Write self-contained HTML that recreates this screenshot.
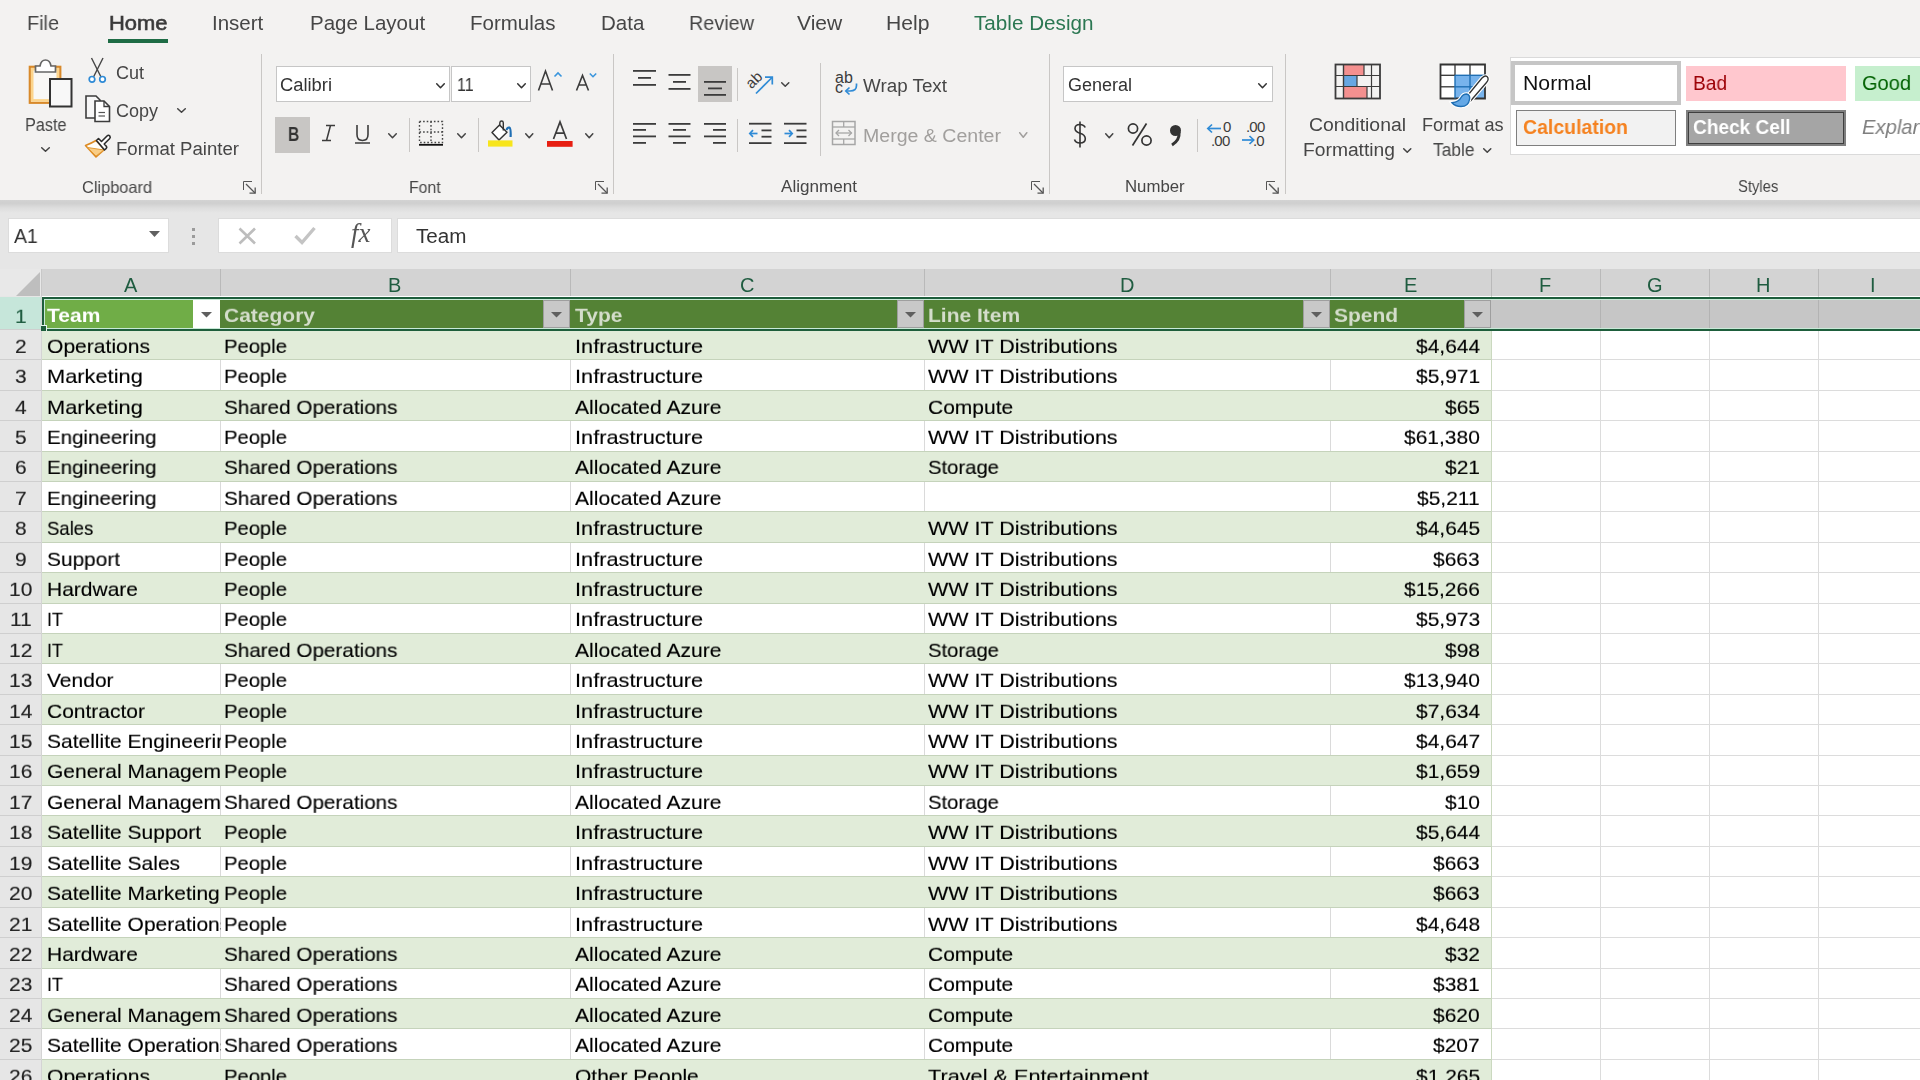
<!DOCTYPE html>
<html><head><meta charset="utf-8"><title>Excel</title><style>
*{margin:0;padding:0;box-sizing:border-box}
html,body{width:1920px;height:1080px;overflow:hidden}
body{position:relative;background:#E6E6E6;font-family:"Liberation Sans",sans-serif;-webkit-font-smoothing:antialiased}
.a{position:absolute}
.t{position:absolute;white-space:pre;will-change:transform}
svg{overflow:visible}
</style></head><body>
<div class="a" style="left:0px;top:0px;width:1920px;height:200px;background:#F3F2F1"></div>
<div class="a" style="left:0px;top:200px;width:1920px;height:13px;background:linear-gradient(#D3D3D3 0%,#CFCFCF 25%,#DDDDDD 60%,#E6E6E6 100%)"></div>
<div class="t" style="left:27.00px;top:13.24px;font-size:20.5px;line-height:20.5px;color:#464646;font-weight:normal;font-style:normal;transform:scale(0.9689,1.0000);transform-origin:0 17.36px;">File</div>
<div class="t" style="left:211.80px;top:13.24px;font-size:20.5px;line-height:20.5px;color:#464646;font-weight:normal;font-style:normal;transform:scale(0.9947,1.0000);transform-origin:0 17.36px;">Insert</div>
<div class="t" style="left:309.70px;top:13.24px;font-size:20.5px;line-height:20.5px;color:#464646;font-weight:normal;font-style:normal;">Page Layout</div>
<div class="t" style="left:470.40px;top:13.24px;font-size:20.5px;line-height:20.5px;color:#464646;font-weight:normal;font-style:normal;transform:scale(0.9948,1.0000);transform-origin:0 17.36px;">Formulas</div>
<div class="t" style="left:600.60px;top:13.24px;font-size:20.5px;line-height:20.5px;color:#464646;font-weight:normal;font-style:normal;transform:scale(0.9927,1.0000);transform-origin:0 17.36px;">Data</div>
<div class="t" style="left:688.60px;top:13.24px;font-size:20.5px;line-height:20.5px;color:#464646;font-weight:normal;font-style:normal;transform:scale(0.9661,1.0000);transform-origin:0 17.36px;">Review</div>
<div class="t" style="left:797.00px;top:13.24px;font-size:20.5px;line-height:20.5px;color:#464646;font-weight:normal;font-style:normal;transform:scale(1.0268,1.0000);transform-origin:0 17.36px;">View</div>
<div class="t" style="left:885.50px;top:13.24px;font-size:20.5px;line-height:20.5px;color:#464646;font-weight:normal;font-style:normal;transform:scale(1.0316,1.0000);transform-origin:0 17.36px;">Help</div>
<div class="t" style="left:108.50px;top:13.24px;font-size:20.5px;line-height:20.5px;color:#3A3A3A;font-weight:normal;font-style:normal;transform:scale(1.0696,1.0000);transform-origin:0 17.36px;-webkit-text-stroke:0.6px #3A3A3A;">Home</div>
<div class="t" style="left:973.60px;top:13.24px;font-size:20.5px;line-height:20.5px;color:#2B7752;font-weight:normal;font-style:normal;transform:scale(1.0083,1.0000);transform-origin:0 17.36px;">Table Design</div>
<div class="a" style="left:108px;top:39px;width:60px;height:4px;background:#1E6C45"></div>
<svg class="a" style="left:28px;top:58px;" width="46" height="50" viewBox="0 0 46 50">
<rect x="1.8" y="8.8" width="30.5" height="36" fill="#F9F8F6" stroke="#D8892A" stroke-width="2.2"/>
<rect x="4.2" y="11.2" width="25.6" height="31.2" fill="none" stroke="#FCD48C" stroke-width="2.6"/>
<path d="M7.5 14 V8 H12 Q13 2 17.5 2 Q22 2 23 8 H27.5 V14 Z" fill="#FFFFFF" stroke="#666" stroke-width="1.7"/>
<rect x="22" y="21" width="21.5" height="27.5" fill="#F8F8F8" stroke="#333" stroke-width="2"/>
</svg>
<div class="t" style="left:25.30px;top:115.76px;font-size:18px;line-height:18px;color:#464646;font-weight:normal;font-style:normal;transform:scale(0.9017,1.0000);transform-origin:0 15.24px;">Paste</div>
<svg class="a" style="left:40.5px;top:147px;" width="9" height="5" viewBox="0 0 9 5"><polyline points="0.7,0.7 4.5,4.3 8.3,0.7" fill="none" stroke="#444" stroke-width="1.5" stroke-linecap="round" stroke-linejoin="round"/></svg>
<svg class="a" style="left:88px;top:57px;" width="19" height="27" viewBox="0 0 19 27">
<line x1="3.5" y1="1" x2="13" y2="20" stroke="#444" stroke-width="1.4"/>
<line x1="15" y1="1" x2="5.5" y2="20" stroke="#444" stroke-width="1.4"/>
<circle cx="4" cy="22.3" r="2.8" fill="#fff" stroke="#2F8BD6" stroke-width="1.7"/>
<circle cx="14.5" cy="22.3" r="2.8" fill="#fff" stroke="#2F8BD6" stroke-width="1.7"/>
</svg>
<div class="t" style="left:116.00px;top:63.56px;font-size:18px;line-height:18px;color:#464646;font-weight:normal;font-style:normal;">Cut</div>
<svg class="a" style="left:84px;top:95px;" width="28" height="28" viewBox="0 0 28 28">
<path d="M2 1 H12 L16 5 V23 H2 Z" fill="#F7F7F7" stroke="#3C3C3C" stroke-width="1.6"/>
<path d="M11 6 H20 L25.5 11.5 V26.5 H11 Z" fill="#FFFFFF" stroke="#3C3C3C" stroke-width="1.6"/>
<path d="M20 6 V11.5 H25.5" fill="none" stroke="#3C3C3C" stroke-width="1.3"/>
<line x1="14.5" y1="17.5" x2="21" y2="17.5" stroke="#555" stroke-width="1.2"/>
<line x1="14.5" y1="21" x2="21" y2="21" stroke="#555" stroke-width="1.2"/>
</svg>
<div class="t" style="left:116.00px;top:101.56px;font-size:18px;line-height:18px;color:#464646;font-weight:normal;font-style:normal;">Copy</div>
<svg class="a" style="left:176.5px;top:107.5px;" width="9" height="5" viewBox="0 0 9 5"><polyline points="0.7,0.7 4.5,4.3 8.3,0.7" fill="none" stroke="#444" stroke-width="1.5" stroke-linecap="round" stroke-linejoin="round"/></svg>
<svg class="a" style="left:80px;top:128px;" width="36" height="36" viewBox="0 0 36 36">
<path d="M5.5 17.5 Q11 15.5 16 12.5 L24.5 21.5 L16 29 Z" fill="#FFFDF8" stroke="#DD8A22" stroke-width="1.6" stroke-linejoin="round"/>
<path d="M7.5 19.5 L24 22 L16 28 Z" fill="#F9CD85" stroke="#E39A35" stroke-width="1"/>
<path d="M16.5 12.5 L18.5 10.5 L21.5 13.5 L27 8 Q28.5 6.5 29.8 8 Q30.8 9.5 29.5 10.8 L24.2 16 L26.5 18.5 Q27.2 19.6 26 20.7 L24.5 22 Z" fill="#FFFFFF" stroke="#2B2B2B" stroke-width="1.6" stroke-linejoin="round"/>
</svg>
<div class="t" style="left:116.00px;top:140.26px;font-size:18px;line-height:18px;color:#464646;font-weight:normal;font-style:normal;transform:scale(1.0333,1.0000);transform-origin:0 15.24px;">Format Painter</div>
<div class="t" style="left:82.00px;top:178.73px;font-size:16.5px;line-height:16.5px;color:#464646;font-weight:normal;font-style:normal;transform:scale(0.9912,1.0000);transform-origin:0 13.97px;">Clipboard</div>
<svg class="a" style="left:243px;top:181px;" width="13" height="13" viewBox="0 0 13 13"><polyline points="0.5,9 0.5,0.5 9,0.5" fill="none" stroke="#555" stroke-width="1"/><line x1="3" y1="3" x2="12" y2="12" stroke="#555" stroke-width="1.3"/><polyline points="6.5,12.2 12.2,12.2 12.2,6.5" fill="none" stroke="#555" stroke-width="1.3"/></svg>
<div class="a" style="left:261px;top:54px;width:1px;height:140px;background:#C9C7C5"></div>
<div class="a" style="left:276px;top:66px;width:174px;height:36px;background:#FFFFFF;border:1px solid #C6C6C6"></div>
<div class="t" style="left:280.00px;top:76.36px;font-size:18px;line-height:18px;color:#333;font-weight:normal;font-style:normal;transform:scale(1.0194,1.0000);transform-origin:0 15.24px;">Calibri</div>
<svg class="a" style="left:435.5px;top:82.5px;" width="9" height="5.5" viewBox="0 0 9 5.5"><polyline points="0.7,0.7 4.5,4.8 8.3,0.7" fill="none" stroke="#333" stroke-width="1.5" stroke-linecap="round" stroke-linejoin="round"/></svg>
<div class="a" style="left:451px;top:66px;width:80px;height:36px;background:#FFFFFF;border:1px solid #C6C6C6"></div>
<div class="t" style="left:456.50px;top:76.36px;font-size:18px;line-height:18px;color:#333;font-weight:normal;font-style:normal;transform:scale(0.8831,1.0000);transform-origin:0 15.24px;">11</div>
<svg class="a" style="left:516.5px;top:82.5px;" width="9" height="5.5" viewBox="0 0 9 5.5"><polyline points="0.7,0.7 4.5,4.8 8.3,0.7" fill="none" stroke="#333" stroke-width="1.5" stroke-linecap="round" stroke-linejoin="round"/></svg>
<svg class="a" style="left:537px;top:70px;" width="27" height="22" viewBox="0 0 27 22">
<path d="M1.5 20.5 L8.5 1 L15.5 20.5 M3.9 14 H13.1" fill="none" stroke="#3C3C3C" stroke-width="1.6"/>
<polyline points="17.5,6.5 21,3 24.5,6.5" fill="none" stroke="#3A96DD" stroke-width="1.6"/>
</svg>
<svg class="a" style="left:575px;top:71px;" width="24" height="21" viewBox="0 0 24 21">
<path d="M1.5 19.5 L7.5 4.5 L13.5 19.5 M3.7 14 H11.3" fill="none" stroke="#3C3C3C" stroke-width="1.6"/>
<polyline points="14.8,2.5 18,5.7 21.2,2.5" fill="none" stroke="#3A96DD" stroke-width="1.6"/>
</svg>
<div class="a" style="left:275px;top:117px;width:35px;height:36px;background:#C8C6C4"></div>
<div class="t" style="left:288.00px;top:123.67px;font-size:20px;line-height:20px;color:#333;font-weight:bold;font-style:normal;transform:scale(0.7825,1.0000);transform-origin:0 16.93px;">B</div>
<svg class="a" style="left:321px;top:124px;" width="15" height="18" viewBox="0 0 15 18">
<path d="M5 1.5 H14 M1 16.5 H10 M9.5 1.5 L5.5 16.5" fill="none" stroke="#3C3C3C" stroke-width="1.5"/>
</svg>
<svg class="a" style="left:354px;top:124px;" width="17" height="21" viewBox="0 0 17 21">
<path d="M3 1 V10.5 Q3 16.5 8.5 16.5 Q14 16.5 14 10.5 V1" fill="none" stroke="#3C3C3C" stroke-width="1.6"/>
<line x1="1" y1="19" x2="16" y2="19" stroke="#3C3C3C" stroke-width="1.5"/>
</svg>
<svg class="a" style="left:387.6px;top:133px;" width="9" height="5.5" viewBox="0 0 9 5.5"><polyline points="0.7,0.7 4.5,4.8 8.3,0.7" fill="none" stroke="#444" stroke-width="1.5" stroke-linecap="round" stroke-linejoin="round"/></svg>
<div class="a" style="left:409px;top:118px;width:1px;height:34px;background:#C9C7C5"></div>
<svg class="a" style="left:418px;top:120px;" width="26" height="27" viewBox="0 0 26 27">
<rect x="1.5" y="1.5" width="23" height="21" fill="none" stroke="#444" stroke-width="1.4" stroke-dasharray="1.6 2"/>
<line x1="13" y1="1.5" x2="13" y2="22.5" stroke="#444" stroke-width="1.4" stroke-dasharray="1.6 2"/>
<line x1="1.5" y1="12" x2="24.5" y2="12" stroke="#444" stroke-width="1.4" stroke-dasharray="1.6 2"/>
<line x1="1" y1="24.8" x2="25" y2="24.8" stroke="#111" stroke-width="1.8"/>
</svg>
<svg class="a" style="left:456.5px;top:133px;" width="9" height="5.5" viewBox="0 0 9 5.5"><polyline points="0.7,0.7 4.5,4.8 8.3,0.7" fill="none" stroke="#444" stroke-width="1.5" stroke-linecap="round" stroke-linejoin="round"/></svg>
<div class="a" style="left:478px;top:118px;width:1px;height:34px;background:#C9C7C5"></div>
<svg class="a" style="left:487px;top:120px;" width="27" height="28" viewBox="0 0 27 28">
<path d="M5 12.5 L12.5 5 L20 12.3 L12 20 Z" fill="#FFFFFF" stroke="#333" stroke-width="1.5" stroke-linejoin="round"/>
<path d="M12.8 5.5 V2.8 Q13 1 14.6 1 Q16.2 1 16.3 2.8 V10.5" fill="none" stroke="#333" stroke-width="1.4"/>
<path d="M19.5 10 Q20.5 7 22.5 7.6 Q24 8.5 23.6 17" fill="none" stroke="#1F6FB4" stroke-width="2.2"/>
<rect x="1" y="20.4" width="24.5" height="6.2" fill="#F7E51C"/>
</svg>
<svg class="a" style="left:525.4px;top:133px;" width="8.5" height="5.5" viewBox="0 0 8.5 5.5"><polyline points="0.7,0.7 4.25,4.8 7.8,0.7" fill="none" stroke="#444" stroke-width="1.5" stroke-linecap="round" stroke-linejoin="round"/></svg>
<svg class="a" style="left:546px;top:120px;" width="28" height="28" viewBox="0 0 28 28">
<path d="M7.5 19 L14 2 L20.5 19 M9.8 13.2 H18.2" fill="none" stroke="#3C3C3C" stroke-width="1.7"/>
<rect x="1" y="21" width="25.6" height="5.8" fill="#E71F12"/>
</svg>
<svg class="a" style="left:584.6px;top:133px;" width="8.5" height="5.5" viewBox="0 0 8.5 5.5"><polyline points="0.7,0.7 4.25,4.8 7.8,0.7" fill="none" stroke="#444" stroke-width="1.5" stroke-linecap="round" stroke-linejoin="round"/></svg>
<div class="t" style="left:409.00px;top:178.63px;font-size:16.5px;line-height:16.5px;color:#464646;font-weight:normal;font-style:normal;transform:scale(0.9571,1.0000);transform-origin:0 13.97px;">Font</div>
<svg class="a" style="left:595px;top:181px;" width="13" height="13" viewBox="0 0 13 13"><polyline points="0.5,9 0.5,0.5 9,0.5" fill="none" stroke="#555" stroke-width="1"/><line x1="3" y1="3" x2="12" y2="12" stroke="#555" stroke-width="1.3"/><polyline points="6.5,12.2 12.2,12.2 12.2,6.5" fill="none" stroke="#555" stroke-width="1.3"/></svg>
<div class="a" style="left:613px;top:54px;width:1px;height:140px;background:#C9C7C5"></div>
<svg class="a" style="left:632px;top:66px;" width="26" height="26" viewBox="0 0 26 26"><rect x="1" y="4" width="23" height="1.8" fill="#3C3C3C"/><rect x="6" y="11" width="13" height="1.8" fill="#3C3C3C"/><rect x="1" y="18" width="23" height="1.8" fill="#3C3C3C"/></svg>
<svg class="a" style="left:667px;top:66px;" width="26" height="30" viewBox="0 0 26 30"><rect x="1.5" y="8" width="22" height="1.8" fill="#3C3C3C"/><rect x="6" y="15" width="13" height="1.8" fill="#3C3C3C"/><rect x="1.5" y="22" width="22" height="1.8" fill="#3C3C3C"/></svg>
<div class="a" style="left:698px;top:66px;width:34px;height:36px;background:#C8C6C4"></div>
<svg class="a" style="left:702px;top:66px;" width="26" height="36" viewBox="0 0 26 36"><rect x="2" y="15" width="22" height="1.8" fill="#3C3C3C"/><rect x="6" y="21.5" width="14" height="1.8" fill="#3C3C3C"/><rect x="2" y="28" width="22" height="1.8" fill="#3C3C3C"/></svg>
<div class="a" style="left:737px;top:68px;width:1px;height:33px;background:#C9C7C5"></div>
<svg class="a" style="left:744px;top:66px;" width="34" height="32" viewBox="0 0 34 32">
<text x="0" y="0" transform="translate(7.5,23.5) rotate(-45)" font-family="Liberation Sans" font-size="15" fill="#3C3C3C">ab</text>
<line x1="12" y1="27.5" x2="28" y2="11.5" stroke="#2F8BD6" stroke-width="1.7"/>
<polyline points="21,11.2 28.3,11.2 28.3,18.5" fill="none" stroke="#2F8BD6" stroke-width="1.7"/>
</svg>
<svg class="a" style="left:780.6px;top:82px;" width="8.5" height="5" viewBox="0 0 8.5 5"><polyline points="0.7,0.7 4.25,4.3 7.8,0.7" fill="none" stroke="#444" stroke-width="1.5" stroke-linecap="round" stroke-linejoin="round"/></svg>
<div class="a" style="left:820px;top:63px;width:1px;height:93px;background:#C9C7C5"></div>
<svg class="a" style="left:834px;top:68px;" width="28" height="30" viewBox="0 0 28 30">
<text x="1" y="15" font-family="Liberation Sans" font-size="16" fill="#3C3C3C">ab</text>
<text x="1" y="25" font-family="Liberation Sans" font-size="16" fill="#3C3C3C">c</text>
<path d="M12 23 H16 Q22.5 23 22.5 17.5 V15.5" fill="none" stroke="#2F8BD6" stroke-width="1.7"/>
<polyline points="15.5,19.5 11.8,23 15.5,26.5" fill="none" stroke="#2F8BD6" stroke-width="1.7"/>
</svg>
<div class="t" style="left:863.00px;top:76.96px;font-size:18px;line-height:18px;color:#464646;font-weight:normal;font-style:normal;transform:scale(1.0452,1.0000);transform-origin:0 15.24px;">Wrap Text</div>
<svg class="a" style="left:632px;top:120px;" width="26" height="26" viewBox="0 0 26 26"><rect x="1" y="3" width="23" height="1.8" fill="#3C3C3C"/><rect x="1" y="9" width="13" height="1.8" fill="#3C3C3C"/><rect x="1" y="15.5" width="23" height="1.8" fill="#3C3C3C"/><rect x="1" y="22" width="13" height="1.8" fill="#3C3C3C"/></svg>
<svg class="a" style="left:667px;top:120px;" width="26" height="26" viewBox="0 0 26 26"><rect x="1.5" y="3" width="22" height="1.8" fill="#3C3C3C"/><rect x="6" y="9" width="13" height="1.8" fill="#3C3C3C"/><rect x="1.5" y="15.5" width="22" height="1.8" fill="#3C3C3C"/><rect x="6" y="22" width="13" height="1.8" fill="#3C3C3C"/></svg>
<svg class="a" style="left:703px;top:120px;" width="26" height="26" viewBox="0 0 26 26"><rect x="1" y="3" width="22" height="1.8" fill="#3C3C3C"/><rect x="10" y="9" width="13" height="1.8" fill="#3C3C3C"/><rect x="1" y="15.5" width="22" height="1.8" fill="#3C3C3C"/><rect x="10" y="22" width="13" height="1.8" fill="#3C3C3C"/></svg>
<div class="a" style="left:737px;top:119px;width:1px;height:33px;background:#C9C7C5"></div>
<svg class="a" style="left:747px;top:120px;" width="26" height="26" viewBox="0 0 26 26">
<rect x="2" y="2.8" width="22.5" height="1.8" fill="#3C3C3C"/><rect x="14.5" y="9.5" width="10" height="1.8" fill="#3C3C3C"/><rect x="14.5" y="15.8" width="10" height="1.8" fill="#3C3C3C"/><rect x="2" y="22.2" width="22.5" height="1.8" fill="#3C3C3C"/>
<line x1="3" y1="13.5" x2="10.5" y2="13.5" stroke="#2F8BD6" stroke-width="1.7"/><polyline points="6,10.2 2.8,13.5 6,16.8" fill="none" stroke="#2F8BD6" stroke-width="1.7"/>
</svg>
<svg class="a" style="left:782px;top:120px;" width="26" height="26" viewBox="0 0 26 26">
<rect x="2" y="2.8" width="22.5" height="1.8" fill="#3C3C3C"/><rect x="14.5" y="9.5" width="10" height="1.8" fill="#3C3C3C"/><rect x="14.5" y="15.8" width="10" height="1.8" fill="#3C3C3C"/><rect x="2" y="22.2" width="22.5" height="1.8" fill="#3C3C3C"/>
<line x1="2.5" y1="13.5" x2="10" y2="13.5" stroke="#2F8BD6" stroke-width="1.7"/><polyline points="7,10.2 10.2,13.5 7,16.8" fill="none" stroke="#2F8BD6" stroke-width="1.7"/>
</svg>
<svg class="a" style="left:831px;top:120px;" width="26" height="27" viewBox="0 0 26 27">
<rect x="1.5" y="1.5" width="22.5" height="23" fill="none" stroke="#A6A6A6" stroke-width="1.5"/>
<line x1="1.5" y1="7" x2="24" y2="7" stroke="#A6A6A6" stroke-width="1.3"/>
<line x1="1.5" y1="19" x2="24" y2="19" stroke="#A6A6A6" stroke-width="1.3"/>
<line x1="12.7" y1="1.5" x2="12.7" y2="7" stroke="#A6A6A6" stroke-width="1.3"/>
<line x1="12.7" y1="19" x2="12.7" y2="24.5" stroke="#A6A6A6" stroke-width="1.3"/>
<line x1="5" y1="13" x2="20.5" y2="13" stroke="#A6A6A6" stroke-width="1.3"/>
<polyline points="8,10 5,13 8,16" fill="none" stroke="#A6A6A6" stroke-width="1.3"/>
<polyline points="17.5,10 20.5,13 17.5,16" fill="none" stroke="#A6A6A6" stroke-width="1.3"/>
</svg>
<div class="t" style="left:863.00px;top:127.36px;font-size:18px;line-height:18px;color:#A19F9D;font-weight:normal;font-style:normal;transform:scale(1.0861,1.0000);transform-origin:0 15.24px;">Merge &amp; Center</div>
<svg class="a" style="left:1019px;top:132px;" width="8.5" height="6" viewBox="0 0 8.5 6"><polyline points="0.7,0.7 4.25,5.3 7.8,0.7" fill="none" stroke="#A19F9D" stroke-width="1.5" stroke-linecap="round" stroke-linejoin="round"/></svg>
<div class="t" style="left:780.60px;top:177.83px;font-size:16.5px;line-height:16.5px;color:#464646;font-weight:normal;font-style:normal;transform:scale(1.0358,1.0000);transform-origin:0 13.97px;">Alignment</div>
<svg class="a" style="left:1031px;top:181px;" width="13" height="13" viewBox="0 0 13 13"><polyline points="0.5,9 0.5,0.5 9,0.5" fill="none" stroke="#555" stroke-width="1"/><line x1="3" y1="3" x2="12" y2="12" stroke="#555" stroke-width="1.3"/><polyline points="6.5,12.2 12.2,12.2 12.2,6.5" fill="none" stroke="#555" stroke-width="1.3"/></svg>
<div class="a" style="left:1049px;top:54px;width:1px;height:140px;background:#C9C7C5"></div>
<div class="a" style="left:1063px;top:66px;width:210px;height:36px;background:#FFFFFF;border:1px solid #C6C6C6"></div>
<div class="t" style="left:1068.00px;top:76.46px;font-size:18px;line-height:18px;color:#333;font-weight:normal;font-style:normal;">General</div>
<svg class="a" style="left:1258px;top:82.5px;" width="9" height="5.5" viewBox="0 0 9 5.5"><polyline points="0.7,0.7 4.5,4.8 8.3,0.7" fill="none" stroke="#333" stroke-width="1.5" stroke-linecap="round" stroke-linejoin="round"/></svg>
<svg class="a" style="left:1072px;top:120px;" width="16" height="29" viewBox="0 0 16 29">
<path d="M13.2 7.5 Q12 4.5 7.8 4.5 Q3 4.5 3 8.5 Q3 11.8 8 13.3 Q13.3 14.8 13.3 18.8 Q13.3 23 8 23 Q3.5 23 2.5 19.5" fill="none" stroke="#333" stroke-width="1.6"/>
<line x1="8" y1="1.5" x2="8" y2="27.5" stroke="#333" stroke-width="1.6"/>
</svg>
<svg class="a" style="left:1105px;top:133px;" width="8.5" height="5.5" viewBox="0 0 8.5 5.5"><polyline points="0.7,0.7 4.25,4.8 7.8,0.7" fill="none" stroke="#444" stroke-width="1.5" stroke-linecap="round" stroke-linejoin="round"/></svg>
<svg class="a" style="left:1127px;top:122px;" width="27" height="26" viewBox="0 0 27 26">
<circle cx="6" cy="6.5" r="4.6" fill="none" stroke="#333" stroke-width="1.7"/>
<circle cx="19.5" cy="18.5" r="4.6" fill="none" stroke="#333" stroke-width="1.7"/>
<line x1="19.5" y1="1.5" x2="5.5" y2="23.5" stroke="#333" stroke-width="1.7"/>
</svg>
<svg class="a" style="left:1169px;top:124px;" width="14" height="22" viewBox="0 0 14 22"><circle cx="6.5" cy="6.5" r="5.5" fill="#333"/><path d="M10 8 Q11 16 3 21" fill="none" stroke="#333" stroke-width="3"/></svg>
<div class="a" style="left:1197px;top:119px;width:1px;height:33px;background:#C9C7C5"></div>
<svg class="a" style="left:1205px;top:119px;" width="30" height="30" viewBox="0 0 30 30">
<text x="18" y="13.2" font-family="Liberation Sans" font-size="15" fill="#3C3C3C" transform="scale(1,1)">0</text>
<text x="6" y="26.5" font-family="Liberation Sans" font-size="15" fill="#3C3C3C" letter-spacing="-0.8">.00</text>
<line x1="3" y1="9.5" x2="16" y2="9.5" stroke="#2F8BD6" stroke-width="1.7"/><polyline points="7,5.5 2.8,9.5 7,13.5" fill="none" stroke="#2F8BD6" stroke-width="1.7"/>
</svg>
<svg class="a" style="left:1240px;top:119px;" width="30" height="30" viewBox="0 0 30 30">
<text x="6" y="13.2" font-family="Liberation Sans" font-size="15" fill="#3C3C3C" letter-spacing="-0.8">.00</text>
<text x="13" y="26.5" font-family="Liberation Sans" font-size="15" fill="#3C3C3C" letter-spacing="-0.8">.0</text>
<line x1="2" y1="21" x2="13.5" y2="21" stroke="#2F8BD6" stroke-width="1.7"/><polyline points="9.5,17 13.7,21 9.5,25" fill="none" stroke="#2F8BD6" stroke-width="1.7"/>
</svg>
<div class="t" style="left:1125.00px;top:178.43px;font-size:16.5px;line-height:16.5px;color:#464646;font-weight:normal;font-style:normal;transform:scale(1.0172,1.0000);transform-origin:0 13.97px;">Number</div>
<svg class="a" style="left:1266px;top:181px;" width="13" height="13" viewBox="0 0 13 13"><polyline points="0.5,9 0.5,0.5 9,0.5" fill="none" stroke="#555" stroke-width="1"/><line x1="3" y1="3" x2="12" y2="12" stroke="#555" stroke-width="1.3"/><polyline points="6.5,12.2 12.2,12.2 12.2,6.5" fill="none" stroke="#555" stroke-width="1.3"/></svg>
<div class="a" style="left:1285px;top:54px;width:1px;height:140px;background:#C9C7C5"></div>
<svg class="a" style="left:1334px;top:63px;" width="48" height="37" viewBox="0 0 48 37">
<rect x="9.5" y="1.5" width="20.5" height="11" fill="#F4908F"/>
<rect x="9.5" y="12.5" width="13.5" height="11" fill="#68A7E2"/>
<rect x="9.5" y="23.5" width="23.5" height="11.5" fill="#F4908F"/>
<rect x="1.5" y="1.5" width="44.5" height="34" fill="none" stroke="#3C3C3C" stroke-width="1.8"/>
<line x1="9.5" y1="1.5" x2="9.5" y2="35.5" stroke="#3C3C3C" stroke-width="1.4"/>
<line x1="37.5" y1="1.5" x2="37.5" y2="35.5" stroke="#3C3C3C" stroke-width="1.2"/>
<line x1="30" y1="1.5" x2="30" y2="12.5" stroke="#3C3C3C" stroke-width="1.2"/>
<line x1="33" y1="23.5" x2="33" y2="35.5" stroke="#3C3C3C" stroke-width="1.2"/>
<line x1="1.5" y1="12.5" x2="46" y2="12.5" stroke="#3C3C3C" stroke-width="1.2"/>
<line x1="1.5" y1="23.5" x2="46" y2="23.5" stroke="#3C3C3C" stroke-width="1.2"/>
<line x1="23" y1="12.5" x2="23" y2="23.5" stroke="#3C3C3C" stroke-width="1.2"/>
</svg>
<div class="t" style="left:1309.00px;top:115.56px;font-size:18px;line-height:18px;color:#464646;font-weight:normal;font-style:normal;transform:scale(1.0771,1.0000);transform-origin:0 15.24px;">Conditional</div>
<div class="t" style="left:1302.50px;top:140.56px;font-size:18px;line-height:18px;color:#464646;font-weight:normal;font-style:normal;transform:scale(1.0695,1.0000);transform-origin:0 15.24px;">Formatting</div>
<svg class="a" style="left:1402.5px;top:147.5px;" width="8.5" height="5" viewBox="0 0 8.5 5"><polyline points="0.7,0.7 4.25,4.3 7.8,0.7" fill="none" stroke="#444" stroke-width="1.5" stroke-linecap="round" stroke-linejoin="round"/></svg>
<svg class="a" style="left:1439px;top:63px;" width="52" height="48" viewBox="0 0 52 48">
<rect x="1.5" y="1.5" width="44.5" height="34" fill="#FFFFFF"/>
<rect x="16" y="12.3" width="30" height="23.5" fill="#77B3EC"/>
<path d="M1.5 35.5 V1.5 H46 V35.5 Z" fill="none" stroke="#333" stroke-width="1.8"/>
<line x1="16" y1="1.5" x2="16" y2="12.3" stroke="#333" stroke-width="1.3"/>
<line x1="31" y1="1.5" x2="31" y2="12.3" stroke="#333" stroke-width="1.3"/>
<line x1="1.5" y1="12.3" x2="16" y2="12.3" stroke="#333" stroke-width="1.3"/>
<line x1="1.5" y1="23.8" x2="16" y2="23.8" stroke="#333" stroke-width="1.3"/>
<line x1="16" y1="12.3" x2="16" y2="35.5" stroke="#1F6FB4" stroke-width="1.4"/>
<line x1="31" y1="12.3" x2="31" y2="35.5" stroke="#1F6FB4" stroke-width="1.4"/>
<line x1="16" y1="12.3" x2="46" y2="12.3" stroke="#1F6FB4" stroke-width="1.4"/>
<line x1="16" y1="23.8" x2="46" y2="23.8" stroke="#1F6FB4" stroke-width="1.4"/>
<path d="M48 13.5 Q50.5 16 47.5 19.5 L31.5 38 L27 34.5 L43 15 Q46 12 48 13.5 Z" fill="#FFFFFF" stroke="#FFFFFF" stroke-width="3.5"/>
<path d="M48 13.5 Q50.5 16 47.5 19.5 L31.5 38 L27 34.5 L43 15 Q46 12 48 13.5 Z" fill="#FFFFFF" stroke="#333" stroke-width="1.3"/>
<path d="M13 39.8 Q20 39 22 34.5 Q24 31 27.5 31 Q31.5 32 30.5 36.5 Q29.5 43.5 22 43.5 Q16 43.5 13 39.8 Z" fill="#FFFFFF" stroke="#FFFFFF" stroke-width="3.5"/>
<path d="M13 39.8 Q20 39 22 34.5 Q24 31 27.5 31 Q31.5 32 30.5 36.5 Q29.5 43.5 22 43.5 Q16 43.5 13 39.8 Z" fill="#64A8E6" stroke="#1F6FB4" stroke-width="1.4"/>
</svg>
<div class="t" style="left:1421.70px;top:115.56px;font-size:18px;line-height:18px;color:#464646;font-weight:normal;font-style:normal;transform:scale(1.0072,1.0000);transform-origin:0 15.24px;">Format as</div>
<div class="t" style="left:1432.50px;top:140.56px;font-size:18px;line-height:18px;color:#464646;font-weight:normal;font-style:normal;transform:scale(0.9643,1.0000);transform-origin:0 15.24px;">Table</div>
<svg class="a" style="left:1482.5px;top:147.5px;" width="8.5" height="5" viewBox="0 0 8.5 5"><polyline points="0.7,0.7 4.25,4.3 7.8,0.7" fill="none" stroke="#444" stroke-width="1.5" stroke-linecap="round" stroke-linejoin="round"/></svg>
<div class="a" style="left:1510px;top:57px;width:420px;height:98px;background:#FFFFFF;border:1px solid #DADADA"></div>
<div class="a" style="left:1511px;top:61px;width:170px;height:44px;background:#C6C6C6"></div>
<div class="a" style="left:1515px;top:65px;width:162px;height:36px;background:#FFFFFF"></div>
<div class="t" style="left:1523.00px;top:71.62px;font-size:21px;line-height:21px;color:#111;font-weight:normal;font-style:normal;transform:scale(1.0106,1.0000);transform-origin:0 17.78px;">Normal</div>
<div class="a" style="left:1686px;top:66px;width:160px;height:35px;background:#FFC7CE"></div>
<div class="t" style="left:1693.00px;top:71.62px;font-size:21px;line-height:21px;color:#9C0006;font-weight:normal;font-style:normal;transform:scale(0.9101,1.0000);transform-origin:0 17.78px;">Bad</div>
<div class="a" style="left:1855px;top:66px;width:80px;height:35px;background:#C6EFCE"></div>
<div class="t" style="left:1862.00px;top:71.62px;font-size:21px;line-height:21px;color:#006100;font-weight:normal;font-style:normal;transform:scale(0.9539,1.0000);transform-origin:0 17.78px;">Good</div>
<div class="a" style="left:1516px;top:110px;width:160px;height:36px;background:#F2F2F2;border:1px solid #7F7F7F"></div>
<div class="t" style="left:1523.00px;top:116.42px;font-size:21px;line-height:21px;color:#F58220;font-weight:bold;font-style:normal;transform:scale(0.9276,1.0000);transform-origin:0 17.78px;">Calculation</div>
<div class="a" style="left:1686px;top:110px;width:160px;height:36px;background:#A5A5A5;border:2px solid #7F7F7F;box-shadow:inset 0 0 0 1px #3F3F3F"></div>
<div class="t" style="left:1692.50px;top:116.42px;font-size:21px;line-height:21px;color:#FFFFFF;font-weight:bold;font-style:normal;transform:scale(0.9080,1.0000);transform-origin:0 17.78px;">Check Cell</div>
<div class="t" style="left:1862.00px;top:116.42px;font-size:21px;line-height:21px;color:#7F7F7F;font-weight:normal;font-style:italic;transform:scale(0.9630,1.0000);transform-origin:0 17.78px;">Explar</div>
<div class="t" style="left:1738.00px;top:178.23px;font-size:16.5px;line-height:16.5px;color:#464646;font-weight:normal;font-style:normal;transform:scale(0.8970,1.0000);transform-origin:0 13.97px;">Styles</div>
<div class="a" style="left:8px;top:218px;width:161px;height:35px;background:#FFFFFF;border:1px solid #DCDCDC"></div>
<div class="t" style="left:14.00px;top:226.27px;font-size:20px;line-height:20px;color:#333;font-weight:normal;font-style:normal;transform:scale(0.9730,1.0000);transform-origin:0 16.93px;">A1</div>
<svg class="a" style="left:149px;top:231px;" width="11" height="7" viewBox="0 0 11 7"><polygon points="0,0 11,0 5.5,6" fill="#606060"/></svg>
<div class="a" style="left:192px;top:228px;width:3px;height:3px;background:#9B9B9B"></div>
<div class="a" style="left:192px;top:235px;width:3px;height:3px;background:#9B9B9B"></div>
<div class="a" style="left:192px;top:242px;width:3px;height:3px;background:#9B9B9B"></div>
<div class="a" style="left:218px;top:218px;width:174px;height:35px;background:#FFFFFF;border:1px solid #DCDCDC"></div>
<svg class="a" style="left:238px;top:227px;" width="19" height="18" viewBox="0 0 19 18"><path d="M1.5 1.5 L17 16.5 M17 1.5 L1.5 16.5" stroke="#BDBDBD" stroke-width="2.6"/></svg>
<svg class="a" style="left:294px;top:226px;" width="22" height="19" viewBox="0 0 22 19"><polyline points="1.5,10 8,16.5 20.5,2" fill="none" stroke="#C4C4C4" stroke-width="3.4"/></svg>
<div class="t" style="left:351px;top:220px;font-family:'Liberation Serif',serif;font-style:italic;font-size:27px;line-height:27px;color:#555">fx</div>
<div class="a" style="left:397px;top:218px;width:1530px;height:35px;background:#FFFFFF;border:1px solid #DCDCDC"></div>
<div class="t" style="left:415.50px;top:226.27px;font-size:20px;line-height:20px;color:#333;font-weight:normal;font-style:normal;transform:scale(1.0327,1.0000);transform-origin:0 16.93px;">Team</div>
<div class="a" style="left:0px;top:269px;width:1920px;height:27px;background:#D3D3D3"></div>
<div class="a" style="left:0px;top:269px;width:41px;height:27px;background:#E8E8E8"></div>
<svg class="a" style="left:16px;top:272px;" width="25" height="24" viewBox="0 0 25 24"><polygon points="24,0 24,24 0,24" fill="#BEBEBE"/></svg>
<div class="a" style="left:220px;top:269px;width:1px;height:27px;background:#B9B9B9"></div>
<div class="a" style="left:570px;top:269px;width:1px;height:27px;background:#B9B9B9"></div>
<div class="a" style="left:924px;top:269px;width:1px;height:27px;background:#B9B9B9"></div>
<div class="a" style="left:1330px;top:269px;width:1px;height:27px;background:#B9B9B9"></div>
<div class="a" style="left:1491px;top:269px;width:1px;height:27px;background:#B9B9B9"></div>
<div class="a" style="left:1600px;top:269px;width:1px;height:27px;background:#B9B9B9"></div>
<div class="a" style="left:1709px;top:269px;width:1px;height:27px;background:#B9B9B9"></div>
<div class="a" style="left:1818px;top:269px;width:1px;height:27px;background:#B9B9B9"></div>
<div class="a" style="left:41px;top:269px;width:1px;height:27px;background:#C8C8C8"></div>
<div class="t" style="left:124.33px;top:275.07px;font-size:20px;line-height:20px;color:#1F5C40;font-weight:normal;font-style:normal;">A</div>
<div class="t" style="left:388.33px;top:275.07px;font-size:20px;line-height:20px;color:#1F5C40;font-weight:normal;font-style:normal;">B</div>
<div class="t" style="left:739.78px;top:275.07px;font-size:20px;line-height:20px;color:#1F5C40;font-weight:normal;font-style:normal;">C</div>
<div class="t" style="left:1119.78px;top:275.07px;font-size:20px;line-height:20px;color:#1F5C40;font-weight:normal;font-style:normal;">D</div>
<div class="t" style="left:1403.83px;top:275.07px;font-size:20px;line-height:20px;color:#1F5C40;font-weight:normal;font-style:normal;">E</div>
<div class="t" style="left:1539.39px;top:275.07px;font-size:20px;line-height:20px;color:#1F5C40;font-weight:normal;font-style:normal;">F</div>
<div class="t" style="left:1646.72px;top:275.07px;font-size:20px;line-height:20px;color:#1F5C40;font-weight:normal;font-style:normal;">G</div>
<div class="t" style="left:1756.28px;top:275.07px;font-size:20px;line-height:20px;color:#1F5C40;font-weight:normal;font-style:normal;">H</div>
<div class="t" style="left:1869.72px;top:275.07px;font-size:20px;line-height:20px;color:#1F5C40;font-weight:normal;font-style:normal;">I</div>
<div class="a" style="left:42px;top:296px;width:1878px;height:784px;background:#FFFFFF"></div>
<div class="a" style="left:0px;top:296px;width:41px;height:784px;background:#E6E6E6"></div>
<div class="a" style="left:41px;top:296px;width:1px;height:784px;background:#D4D4D4"></div>
<div class="a" style="left:0px;top:297px;width:41px;height:32px;background:#C6E6DA"></div>
<div class="a" style="left:0px;top:329px;width:41px;height:1px;background:#CFCFCF"></div>
<div class="a" style="left:0px;top:359px;width:41px;height:1px;background:#CFCFCF"></div>
<div class="a" style="left:0px;top:390px;width:41px;height:1px;background:#CFCFCF"></div>
<div class="a" style="left:0px;top:420px;width:41px;height:1px;background:#CFCFCF"></div>
<div class="a" style="left:0px;top:451px;width:41px;height:1px;background:#CFCFCF"></div>
<div class="a" style="left:0px;top:481px;width:41px;height:1px;background:#CFCFCF"></div>
<div class="a" style="left:0px;top:511px;width:41px;height:1px;background:#CFCFCF"></div>
<div class="a" style="left:0px;top:542px;width:41px;height:1px;background:#CFCFCF"></div>
<div class="a" style="left:0px;top:572px;width:41px;height:1px;background:#CFCFCF"></div>
<div class="a" style="left:0px;top:603px;width:41px;height:1px;background:#CFCFCF"></div>
<div class="a" style="left:0px;top:633px;width:41px;height:1px;background:#CFCFCF"></div>
<div class="a" style="left:0px;top:663px;width:41px;height:1px;background:#CFCFCF"></div>
<div class="a" style="left:0px;top:694px;width:41px;height:1px;background:#CFCFCF"></div>
<div class="a" style="left:0px;top:724px;width:41px;height:1px;background:#CFCFCF"></div>
<div class="a" style="left:0px;top:755px;width:41px;height:1px;background:#CFCFCF"></div>
<div class="a" style="left:0px;top:785px;width:41px;height:1px;background:#CFCFCF"></div>
<div class="a" style="left:0px;top:815px;width:41px;height:1px;background:#CFCFCF"></div>
<div class="a" style="left:0px;top:846px;width:41px;height:1px;background:#CFCFCF"></div>
<div class="a" style="left:0px;top:876px;width:41px;height:1px;background:#CFCFCF"></div>
<div class="a" style="left:0px;top:907px;width:41px;height:1px;background:#CFCFCF"></div>
<div class="a" style="left:0px;top:937px;width:41px;height:1px;background:#CFCFCF"></div>
<div class="a" style="left:0px;top:968px;width:41px;height:1px;background:#CFCFCF"></div>
<div class="a" style="left:0px;top:998px;width:41px;height:1px;background:#CFCFCF"></div>
<div class="a" style="left:0px;top:1028px;width:41px;height:1px;background:#CFCFCF"></div>
<div class="a" style="left:0px;top:1059px;width:41px;height:1px;background:#CFCFCF"></div>
<div class="a" style="left:0px;top:1089px;width:41px;height:1px;background:#CFCFCF"></div>
<div class="a" style="left:42px;top:329px;width:1449px;height:30px;background:#E1ECD9"></div>
<div class="a" style="left:42px;top:390px;width:1449px;height:30px;background:#E1ECD9"></div>
<div class="a" style="left:42px;top:451px;width:1449px;height:30px;background:#E1ECD9"></div>
<div class="a" style="left:42px;top:511px;width:1449px;height:31px;background:#E1ECD9"></div>
<div class="a" style="left:42px;top:572px;width:1449px;height:31px;background:#E1ECD9"></div>
<div class="a" style="left:42px;top:633px;width:1449px;height:30px;background:#E1ECD9"></div>
<div class="a" style="left:42px;top:694px;width:1449px;height:30px;background:#E1ECD9"></div>
<div class="a" style="left:42px;top:755px;width:1449px;height:30px;background:#E1ECD9"></div>
<div class="a" style="left:42px;top:815px;width:1449px;height:31px;background:#E1ECD9"></div>
<div class="a" style="left:42px;top:876px;width:1449px;height:31px;background:#E1ECD9"></div>
<div class="a" style="left:42px;top:937px;width:1449px;height:31px;background:#E1ECD9"></div>
<div class="a" style="left:42px;top:998px;width:1449px;height:30px;background:#E1ECD9"></div>
<div class="a" style="left:42px;top:1059px;width:1449px;height:30px;background:#E1ECD9"></div>
<div class="a" style="left:1491px;top:329px;width:429px;height:1px;background:#DCDCDC"></div>
<div class="a" style="left:1491px;top:359px;width:429px;height:1px;background:#DCDCDC"></div>
<div class="a" style="left:1491px;top:390px;width:429px;height:1px;background:#DCDCDC"></div>
<div class="a" style="left:1491px;top:420px;width:429px;height:1px;background:#DCDCDC"></div>
<div class="a" style="left:1491px;top:451px;width:429px;height:1px;background:#DCDCDC"></div>
<div class="a" style="left:1491px;top:481px;width:429px;height:1px;background:#DCDCDC"></div>
<div class="a" style="left:1491px;top:511px;width:429px;height:1px;background:#DCDCDC"></div>
<div class="a" style="left:1491px;top:542px;width:429px;height:1px;background:#DCDCDC"></div>
<div class="a" style="left:1491px;top:572px;width:429px;height:1px;background:#DCDCDC"></div>
<div class="a" style="left:1491px;top:603px;width:429px;height:1px;background:#DCDCDC"></div>
<div class="a" style="left:1491px;top:633px;width:429px;height:1px;background:#DCDCDC"></div>
<div class="a" style="left:1491px;top:663px;width:429px;height:1px;background:#DCDCDC"></div>
<div class="a" style="left:1491px;top:694px;width:429px;height:1px;background:#DCDCDC"></div>
<div class="a" style="left:1491px;top:724px;width:429px;height:1px;background:#DCDCDC"></div>
<div class="a" style="left:1491px;top:755px;width:429px;height:1px;background:#DCDCDC"></div>
<div class="a" style="left:1491px;top:785px;width:429px;height:1px;background:#DCDCDC"></div>
<div class="a" style="left:1491px;top:815px;width:429px;height:1px;background:#DCDCDC"></div>
<div class="a" style="left:1491px;top:846px;width:429px;height:1px;background:#DCDCDC"></div>
<div class="a" style="left:1491px;top:876px;width:429px;height:1px;background:#DCDCDC"></div>
<div class="a" style="left:1491px;top:907px;width:429px;height:1px;background:#DCDCDC"></div>
<div class="a" style="left:1491px;top:937px;width:429px;height:1px;background:#DCDCDC"></div>
<div class="a" style="left:1491px;top:968px;width:429px;height:1px;background:#DCDCDC"></div>
<div class="a" style="left:1491px;top:998px;width:429px;height:1px;background:#DCDCDC"></div>
<div class="a" style="left:1491px;top:1028px;width:429px;height:1px;background:#DCDCDC"></div>
<div class="a" style="left:1491px;top:1059px;width:429px;height:1px;background:#DCDCDC"></div>
<div class="a" style="left:1491px;top:1089px;width:429px;height:1px;background:#DCDCDC"></div>
<div class="a" style="left:1600px;top:296px;width:1px;height:784px;background:#DCDCDC"></div>
<div class="a" style="left:1709px;top:296px;width:1px;height:784px;background:#DCDCDC"></div>
<div class="a" style="left:1818px;top:296px;width:1px;height:784px;background:#DCDCDC"></div>
<div class="a" style="left:1491px;top:296px;width:1px;height:784px;background:#CBD9C0"></div>
<div class="a" style="left:220px;top:359px;width:1px;height:31px;background:#DADADA"></div>
<div class="a" style="left:570px;top:359px;width:1px;height:31px;background:#DADADA"></div>
<div class="a" style="left:924px;top:359px;width:1px;height:31px;background:#DADADA"></div>
<div class="a" style="left:1330px;top:359px;width:1px;height:31px;background:#DADADA"></div>
<div class="a" style="left:220px;top:420px;width:1px;height:31px;background:#DADADA"></div>
<div class="a" style="left:570px;top:420px;width:1px;height:31px;background:#DADADA"></div>
<div class="a" style="left:924px;top:420px;width:1px;height:31px;background:#DADADA"></div>
<div class="a" style="left:1330px;top:420px;width:1px;height:31px;background:#DADADA"></div>
<div class="a" style="left:220px;top:481px;width:1px;height:30px;background:#DADADA"></div>
<div class="a" style="left:570px;top:481px;width:1px;height:30px;background:#DADADA"></div>
<div class="a" style="left:924px;top:481px;width:1px;height:30px;background:#DADADA"></div>
<div class="a" style="left:1330px;top:481px;width:1px;height:30px;background:#DADADA"></div>
<div class="a" style="left:220px;top:542px;width:1px;height:30px;background:#DADADA"></div>
<div class="a" style="left:570px;top:542px;width:1px;height:30px;background:#DADADA"></div>
<div class="a" style="left:924px;top:542px;width:1px;height:30px;background:#DADADA"></div>
<div class="a" style="left:1330px;top:542px;width:1px;height:30px;background:#DADADA"></div>
<div class="a" style="left:220px;top:603px;width:1px;height:30px;background:#DADADA"></div>
<div class="a" style="left:570px;top:603px;width:1px;height:30px;background:#DADADA"></div>
<div class="a" style="left:924px;top:603px;width:1px;height:30px;background:#DADADA"></div>
<div class="a" style="left:1330px;top:603px;width:1px;height:30px;background:#DADADA"></div>
<div class="a" style="left:220px;top:663px;width:1px;height:31px;background:#DADADA"></div>
<div class="a" style="left:570px;top:663px;width:1px;height:31px;background:#DADADA"></div>
<div class="a" style="left:924px;top:663px;width:1px;height:31px;background:#DADADA"></div>
<div class="a" style="left:1330px;top:663px;width:1px;height:31px;background:#DADADA"></div>
<div class="a" style="left:220px;top:724px;width:1px;height:31px;background:#DADADA"></div>
<div class="a" style="left:570px;top:724px;width:1px;height:31px;background:#DADADA"></div>
<div class="a" style="left:924px;top:724px;width:1px;height:31px;background:#DADADA"></div>
<div class="a" style="left:1330px;top:724px;width:1px;height:31px;background:#DADADA"></div>
<div class="a" style="left:220px;top:785px;width:1px;height:30px;background:#DADADA"></div>
<div class="a" style="left:570px;top:785px;width:1px;height:30px;background:#DADADA"></div>
<div class="a" style="left:924px;top:785px;width:1px;height:30px;background:#DADADA"></div>
<div class="a" style="left:1330px;top:785px;width:1px;height:30px;background:#DADADA"></div>
<div class="a" style="left:220px;top:846px;width:1px;height:30px;background:#DADADA"></div>
<div class="a" style="left:570px;top:846px;width:1px;height:30px;background:#DADADA"></div>
<div class="a" style="left:924px;top:846px;width:1px;height:30px;background:#DADADA"></div>
<div class="a" style="left:1330px;top:846px;width:1px;height:30px;background:#DADADA"></div>
<div class="a" style="left:220px;top:907px;width:1px;height:30px;background:#DADADA"></div>
<div class="a" style="left:570px;top:907px;width:1px;height:30px;background:#DADADA"></div>
<div class="a" style="left:924px;top:907px;width:1px;height:30px;background:#DADADA"></div>
<div class="a" style="left:1330px;top:907px;width:1px;height:30px;background:#DADADA"></div>
<div class="a" style="left:220px;top:968px;width:1px;height:30px;background:#DADADA"></div>
<div class="a" style="left:570px;top:968px;width:1px;height:30px;background:#DADADA"></div>
<div class="a" style="left:924px;top:968px;width:1px;height:30px;background:#DADADA"></div>
<div class="a" style="left:1330px;top:968px;width:1px;height:30px;background:#DADADA"></div>
<div class="a" style="left:220px;top:1028px;width:1px;height:31px;background:#DADADA"></div>
<div class="a" style="left:570px;top:1028px;width:1px;height:31px;background:#DADADA"></div>
<div class="a" style="left:924px;top:1028px;width:1px;height:31px;background:#DADADA"></div>
<div class="a" style="left:1330px;top:1028px;width:1px;height:31px;background:#DADADA"></div>
<div class="a" style="left:42px;top:359px;width:1449px;height:1px;background:#C5D3BB"></div>
<div class="a" style="left:42px;top:390px;width:1449px;height:1px;background:#C5D3BB"></div>
<div class="a" style="left:42px;top:420px;width:1449px;height:1px;background:#C5D3BB"></div>
<div class="a" style="left:42px;top:451px;width:1449px;height:1px;background:#C5D3BB"></div>
<div class="a" style="left:42px;top:481px;width:1449px;height:1px;background:#C5D3BB"></div>
<div class="a" style="left:42px;top:511px;width:1449px;height:1px;background:#C5D3BB"></div>
<div class="a" style="left:42px;top:542px;width:1449px;height:1px;background:#C5D3BB"></div>
<div class="a" style="left:42px;top:572px;width:1449px;height:1px;background:#C5D3BB"></div>
<div class="a" style="left:42px;top:603px;width:1449px;height:1px;background:#C5D3BB"></div>
<div class="a" style="left:42px;top:633px;width:1449px;height:1px;background:#C5D3BB"></div>
<div class="a" style="left:42px;top:663px;width:1449px;height:1px;background:#C5D3BB"></div>
<div class="a" style="left:42px;top:694px;width:1449px;height:1px;background:#C5D3BB"></div>
<div class="a" style="left:42px;top:724px;width:1449px;height:1px;background:#C5D3BB"></div>
<div class="a" style="left:42px;top:755px;width:1449px;height:1px;background:#C5D3BB"></div>
<div class="a" style="left:42px;top:785px;width:1449px;height:1px;background:#C5D3BB"></div>
<div class="a" style="left:42px;top:815px;width:1449px;height:1px;background:#C5D3BB"></div>
<div class="a" style="left:42px;top:846px;width:1449px;height:1px;background:#C5D3BB"></div>
<div class="a" style="left:42px;top:876px;width:1449px;height:1px;background:#C5D3BB"></div>
<div class="a" style="left:42px;top:907px;width:1449px;height:1px;background:#C5D3BB"></div>
<div class="a" style="left:42px;top:937px;width:1449px;height:1px;background:#C5D3BB"></div>
<div class="a" style="left:42px;top:968px;width:1449px;height:1px;background:#C5D3BB"></div>
<div class="a" style="left:42px;top:998px;width:1449px;height:1px;background:#C5D3BB"></div>
<div class="a" style="left:42px;top:1028px;width:1449px;height:1px;background:#C5D3BB"></div>
<div class="a" style="left:42px;top:1059px;width:1449px;height:1px;background:#C5D3BB"></div>
<div class="a" style="left:42px;top:1089px;width:1449px;height:1px;background:#C5D3BB"></div>
<div class="t" style="left:14.66px;top:334.73px;font-size:21px;line-height:21px;color:#222;font-weight:normal;transform:scale(1.0,0.95);transform-origin:0 17.78px;-webkit-text-stroke:0.15px #222;">2</div>
<div class="a" style="left:47.00px;top:330.73px;width:174px;height:29px;overflow:hidden"><div class="t" style="left:0;top:4px;font-size:21px;line-height:21px;color:#000;font-weight:normal;transform:scale(1.003,0.95);transform-origin:0 17.78px;-webkit-text-stroke:0.15px #000;">Operations</div></div>
<div class="t" style="left:224.00px;top:334.73px;font-size:21px;line-height:21px;color:#000;font-weight:normal;transform:scale(0.963,0.95);transform-origin:0 17.78px;-webkit-text-stroke:0.15px #000;">People</div>
<div class="t" style="left:575.00px;top:334.73px;font-size:21px;line-height:21px;color:#000;font-weight:normal;transform:scale(1.036,0.95);transform-origin:0 17.78px;-webkit-text-stroke:0.15px #000;">Infrastructure</div>
<div class="t" style="left:928.00px;top:334.73px;font-size:21px;line-height:21px;color:#000;font-weight:normal;transform:scale(1.024,0.95);transform-origin:0 17.78px;-webkit-text-stroke:0.15px #000;">WW IT Distributions</div>
<div class="t" style="left:1415.76px;top:334.73px;font-size:21px;line-height:21px;color:#000;font-weight:normal;transform:scale(1.0,0.95);transform-origin:0 17.78px;-webkit-text-stroke:0.15px #000;">$4,644</div>
<div class="t" style="left:14.66px;top:365.14px;font-size:21px;line-height:21px;color:#222;font-weight:normal;transform:scale(1.0,0.95);transform-origin:0 17.78px;-webkit-text-stroke:0.15px #222;">3</div>
<div class="a" style="left:47.00px;top:361.14px;width:174px;height:29px;overflow:hidden"><div class="t" style="left:0;top:4px;font-size:21px;line-height:21px;color:#000;font-weight:normal;transform:scale(1.039,0.95);transform-origin:0 17.78px;-webkit-text-stroke:0.15px #000;">Marketing</div></div>
<div class="t" style="left:224.00px;top:365.14px;font-size:21px;line-height:21px;color:#000;font-weight:normal;transform:scale(0.963,0.95);transform-origin:0 17.78px;-webkit-text-stroke:0.15px #000;">People</div>
<div class="t" style="left:575.00px;top:365.14px;font-size:21px;line-height:21px;color:#000;font-weight:normal;transform:scale(1.036,0.95);transform-origin:0 17.78px;-webkit-text-stroke:0.15px #000;">Infrastructure</div>
<div class="t" style="left:928.00px;top:365.14px;font-size:21px;line-height:21px;color:#000;font-weight:normal;transform:scale(1.024,0.95);transform-origin:0 17.78px;-webkit-text-stroke:0.15px #000;">WW IT Distributions</div>
<div class="t" style="left:1415.76px;top:365.14px;font-size:21px;line-height:21px;color:#000;font-weight:normal;transform:scale(1.0,0.95);transform-origin:0 17.78px;-webkit-text-stroke:0.15px #000;">$5,971</div>
<div class="t" style="left:14.66px;top:395.55px;font-size:21px;line-height:21px;color:#222;font-weight:normal;transform:scale(1.0,0.95);transform-origin:0 17.78px;-webkit-text-stroke:0.15px #222;">4</div>
<div class="a" style="left:47.00px;top:391.55px;width:174px;height:29px;overflow:hidden"><div class="t" style="left:0;top:4px;font-size:21px;line-height:21px;color:#000;font-weight:normal;transform:scale(1.039,0.95);transform-origin:0 17.78px;-webkit-text-stroke:0.15px #000;">Marketing</div></div>
<div class="t" style="left:224.00px;top:395.55px;font-size:21px;line-height:21px;color:#000;font-weight:normal;transform:scale(0.984,0.95);transform-origin:0 17.78px;-webkit-text-stroke:0.15px #000;">Shared Operations</div>
<div class="t" style="left:575.00px;top:395.55px;font-size:21px;line-height:21px;color:#000;font-weight:normal;transform:scale(1.004,0.95);transform-origin:0 17.78px;-webkit-text-stroke:0.15px #000;">Allocated Azure</div>
<div class="t" style="left:928.00px;top:395.55px;font-size:21px;line-height:21px;color:#000;font-weight:normal;transform:scale(1.0,0.95);transform-origin:0 17.78px;-webkit-text-stroke:0.15px #000;">Compute</div>
<div class="t" style="left:1444.97px;top:395.55px;font-size:21px;line-height:21px;color:#000;font-weight:normal;transform:scale(1.0,0.95);transform-origin:0 17.78px;-webkit-text-stroke:0.15px #000;">$65</div>
<div class="t" style="left:14.66px;top:425.96px;font-size:21px;line-height:21px;color:#222;font-weight:normal;transform:scale(1.0,0.95);transform-origin:0 17.78px;-webkit-text-stroke:0.15px #222;">5</div>
<div class="a" style="left:47.00px;top:421.96px;width:174px;height:29px;overflow:hidden"><div class="t" style="left:0;top:4px;font-size:21px;line-height:21px;color:#000;font-weight:normal;transform:scale(0.976,0.95);transform-origin:0 17.78px;-webkit-text-stroke:0.15px #000;">Engineering</div></div>
<div class="t" style="left:224.00px;top:425.96px;font-size:21px;line-height:21px;color:#000;font-weight:normal;transform:scale(0.963,0.95);transform-origin:0 17.78px;-webkit-text-stroke:0.15px #000;">People</div>
<div class="t" style="left:575.00px;top:425.96px;font-size:21px;line-height:21px;color:#000;font-weight:normal;transform:scale(1.036,0.95);transform-origin:0 17.78px;-webkit-text-stroke:0.15px #000;">Infrastructure</div>
<div class="t" style="left:928.00px;top:425.96px;font-size:21px;line-height:21px;color:#000;font-weight:normal;transform:scale(1.024,0.95);transform-origin:0 17.78px;-webkit-text-stroke:0.15px #000;">WW IT Distributions</div>
<div class="t" style="left:1404.09px;top:425.96px;font-size:21px;line-height:21px;color:#000;font-weight:normal;transform:scale(1.0,0.95);transform-origin:0 17.78px;-webkit-text-stroke:0.15px #000;">$61,380</div>
<div class="t" style="left:14.66px;top:456.37px;font-size:21px;line-height:21px;color:#222;font-weight:normal;transform:scale(1.0,0.95);transform-origin:0 17.78px;-webkit-text-stroke:0.15px #222;">6</div>
<div class="a" style="left:47.00px;top:452.37px;width:174px;height:29px;overflow:hidden"><div class="t" style="left:0;top:4px;font-size:21px;line-height:21px;color:#000;font-weight:normal;transform:scale(0.976,0.95);transform-origin:0 17.78px;-webkit-text-stroke:0.15px #000;">Engineering</div></div>
<div class="t" style="left:224.00px;top:456.37px;font-size:21px;line-height:21px;color:#000;font-weight:normal;transform:scale(0.984,0.95);transform-origin:0 17.78px;-webkit-text-stroke:0.15px #000;">Shared Operations</div>
<div class="t" style="left:575.00px;top:456.37px;font-size:21px;line-height:21px;color:#000;font-weight:normal;transform:scale(1.004,0.95);transform-origin:0 17.78px;-webkit-text-stroke:0.15px #000;">Allocated Azure</div>
<div class="t" style="left:928.00px;top:456.37px;font-size:21px;line-height:21px;color:#000;font-weight:normal;transform:scale(0.965,0.95);transform-origin:0 17.78px;-webkit-text-stroke:0.15px #000;">Storage</div>
<div class="t" style="left:1444.97px;top:456.37px;font-size:21px;line-height:21px;color:#000;font-weight:normal;transform:scale(1.0,0.95);transform-origin:0 17.78px;-webkit-text-stroke:0.15px #000;">$21</div>
<div class="t" style="left:14.66px;top:486.78px;font-size:21px;line-height:21px;color:#222;font-weight:normal;transform:scale(1.0,0.95);transform-origin:0 17.78px;-webkit-text-stroke:0.15px #222;">7</div>
<div class="a" style="left:47.00px;top:482.78px;width:174px;height:29px;overflow:hidden"><div class="t" style="left:0;top:4px;font-size:21px;line-height:21px;color:#000;font-weight:normal;transform:scale(0.976,0.95);transform-origin:0 17.78px;-webkit-text-stroke:0.15px #000;">Engineering</div></div>
<div class="t" style="left:224.00px;top:486.78px;font-size:21px;line-height:21px;color:#000;font-weight:normal;transform:scale(0.984,0.95);transform-origin:0 17.78px;-webkit-text-stroke:0.15px #000;">Shared Operations</div>
<div class="t" style="left:575.00px;top:486.78px;font-size:21px;line-height:21px;color:#000;font-weight:normal;transform:scale(1.004,0.95);transform-origin:0 17.78px;-webkit-text-stroke:0.15px #000;">Allocated Azure</div>
<div class="t" style="left:1417.34px;top:486.78px;font-size:21px;line-height:21px;color:#000;font-weight:normal;transform:scale(1.0,0.95);transform-origin:0 17.78px;-webkit-text-stroke:0.15px #000;">$5,211</div>
<div class="t" style="left:14.66px;top:517.19px;font-size:21px;line-height:21px;color:#222;font-weight:normal;transform:scale(1.0,0.95);transform-origin:0 17.78px;-webkit-text-stroke:0.15px #222;">8</div>
<div class="a" style="left:47.00px;top:513.19px;width:174px;height:29px;overflow:hidden"><div class="t" style="left:0;top:4px;font-size:21px;line-height:21px;color:#000;font-weight:normal;transform:scale(0.882,0.95);transform-origin:0 17.78px;-webkit-text-stroke:0.15px #000;">Sales</div></div>
<div class="t" style="left:224.00px;top:517.19px;font-size:21px;line-height:21px;color:#000;font-weight:normal;transform:scale(0.963,0.95);transform-origin:0 17.78px;-webkit-text-stroke:0.15px #000;">People</div>
<div class="t" style="left:575.00px;top:517.19px;font-size:21px;line-height:21px;color:#000;font-weight:normal;transform:scale(1.036,0.95);transform-origin:0 17.78px;-webkit-text-stroke:0.15px #000;">Infrastructure</div>
<div class="t" style="left:928.00px;top:517.19px;font-size:21px;line-height:21px;color:#000;font-weight:normal;transform:scale(1.024,0.95);transform-origin:0 17.78px;-webkit-text-stroke:0.15px #000;">WW IT Distributions</div>
<div class="t" style="left:1415.76px;top:517.19px;font-size:21px;line-height:21px;color:#000;font-weight:normal;transform:scale(1.0,0.95);transform-origin:0 17.78px;-webkit-text-stroke:0.15px #000;">$4,645</div>
<div class="t" style="left:14.66px;top:547.60px;font-size:21px;line-height:21px;color:#222;font-weight:normal;transform:scale(1.0,0.95);transform-origin:0 17.78px;-webkit-text-stroke:0.15px #222;">9</div>
<div class="a" style="left:47.00px;top:543.60px;width:174px;height:29px;overflow:hidden"><div class="t" style="left:0;top:4px;font-size:21px;line-height:21px;color:#000;font-weight:normal;transform:scale(0.993,0.95);transform-origin:0 17.78px;-webkit-text-stroke:0.15px #000;">Support</div></div>
<div class="t" style="left:224.00px;top:547.60px;font-size:21px;line-height:21px;color:#000;font-weight:normal;transform:scale(0.963,0.95);transform-origin:0 17.78px;-webkit-text-stroke:0.15px #000;">People</div>
<div class="t" style="left:575.00px;top:547.60px;font-size:21px;line-height:21px;color:#000;font-weight:normal;transform:scale(1.036,0.95);transform-origin:0 17.78px;-webkit-text-stroke:0.15px #000;">Infrastructure</div>
<div class="t" style="left:928.00px;top:547.60px;font-size:21px;line-height:21px;color:#000;font-weight:normal;transform:scale(1.024,0.95);transform-origin:0 17.78px;-webkit-text-stroke:0.15px #000;">WW IT Distributions</div>
<div class="t" style="left:1433.28px;top:547.60px;font-size:21px;line-height:21px;color:#000;font-weight:normal;transform:scale(1.0,0.95);transform-origin:0 17.78px;-webkit-text-stroke:0.15px #000;">$663</div>
<div class="t" style="left:8.82px;top:578.01px;font-size:21px;line-height:21px;color:#222;font-weight:normal;transform:scale(1.0,0.95);transform-origin:0 17.78px;-webkit-text-stroke:0.15px #222;">10</div>
<div class="a" style="left:47.00px;top:574.01px;width:174px;height:29px;overflow:hidden"><div class="t" style="left:0;top:4px;font-size:21px;line-height:21px;color:#000;font-weight:normal;transform:scale(1.0,0.95);transform-origin:0 17.78px;-webkit-text-stroke:0.15px #000;">Hardware</div></div>
<div class="t" style="left:224.00px;top:578.01px;font-size:21px;line-height:21px;color:#000;font-weight:normal;transform:scale(0.963,0.95);transform-origin:0 17.78px;-webkit-text-stroke:0.15px #000;">People</div>
<div class="t" style="left:575.00px;top:578.01px;font-size:21px;line-height:21px;color:#000;font-weight:normal;transform:scale(1.036,0.95);transform-origin:0 17.78px;-webkit-text-stroke:0.15px #000;">Infrastructure</div>
<div class="t" style="left:928.00px;top:578.01px;font-size:21px;line-height:21px;color:#000;font-weight:normal;transform:scale(1.024,0.95);transform-origin:0 17.78px;-webkit-text-stroke:0.15px #000;">WW IT Distributions</div>
<div class="t" style="left:1404.09px;top:578.01px;font-size:21px;line-height:21px;color:#000;font-weight:normal;transform:scale(1.0,0.95);transform-origin:0 17.78px;-webkit-text-stroke:0.15px #000;">$15,266</div>
<div class="t" style="left:9.60px;top:608.42px;font-size:21px;line-height:21px;color:#222;font-weight:normal;transform:scale(1.0,0.95);transform-origin:0 17.78px;-webkit-text-stroke:0.15px #222;">11</div>
<div class="a" style="left:47.00px;top:604.42px;width:174px;height:29px;overflow:hidden"><div class="t" style="left:0;top:4px;font-size:21px;line-height:21px;color:#000;font-weight:normal;transform:scale(0.857,0.95);transform-origin:0 17.78px;-webkit-text-stroke:0.15px #000;">IT</div></div>
<div class="t" style="left:224.00px;top:608.42px;font-size:21px;line-height:21px;color:#000;font-weight:normal;transform:scale(0.963,0.95);transform-origin:0 17.78px;-webkit-text-stroke:0.15px #000;">People</div>
<div class="t" style="left:575.00px;top:608.42px;font-size:21px;line-height:21px;color:#000;font-weight:normal;transform:scale(1.036,0.95);transform-origin:0 17.78px;-webkit-text-stroke:0.15px #000;">Infrastructure</div>
<div class="t" style="left:928.00px;top:608.42px;font-size:21px;line-height:21px;color:#000;font-weight:normal;transform:scale(1.024,0.95);transform-origin:0 17.78px;-webkit-text-stroke:0.15px #000;">WW IT Distributions</div>
<div class="t" style="left:1415.76px;top:608.42px;font-size:21px;line-height:21px;color:#000;font-weight:normal;transform:scale(1.0,0.95);transform-origin:0 17.78px;-webkit-text-stroke:0.15px #000;">$5,973</div>
<div class="t" style="left:8.82px;top:638.83px;font-size:21px;line-height:21px;color:#222;font-weight:normal;transform:scale(1.0,0.95);transform-origin:0 17.78px;-webkit-text-stroke:0.15px #222;">12</div>
<div class="a" style="left:47.00px;top:634.83px;width:174px;height:29px;overflow:hidden"><div class="t" style="left:0;top:4px;font-size:21px;line-height:21px;color:#000;font-weight:normal;transform:scale(0.857,0.95);transform-origin:0 17.78px;-webkit-text-stroke:0.15px #000;">IT</div></div>
<div class="t" style="left:224.00px;top:638.83px;font-size:21px;line-height:21px;color:#000;font-weight:normal;transform:scale(0.984,0.95);transform-origin:0 17.78px;-webkit-text-stroke:0.15px #000;">Shared Operations</div>
<div class="t" style="left:575.00px;top:638.83px;font-size:21px;line-height:21px;color:#000;font-weight:normal;transform:scale(1.004,0.95);transform-origin:0 17.78px;-webkit-text-stroke:0.15px #000;">Allocated Azure</div>
<div class="t" style="left:928.00px;top:638.83px;font-size:21px;line-height:21px;color:#000;font-weight:normal;transform:scale(0.965,0.95);transform-origin:0 17.78px;-webkit-text-stroke:0.15px #000;">Storage</div>
<div class="t" style="left:1444.97px;top:638.83px;font-size:21px;line-height:21px;color:#000;font-weight:normal;transform:scale(1.0,0.95);transform-origin:0 17.78px;-webkit-text-stroke:0.15px #000;">$98</div>
<div class="t" style="left:8.82px;top:669.24px;font-size:21px;line-height:21px;color:#222;font-weight:normal;transform:scale(1.0,0.95);transform-origin:0 17.78px;-webkit-text-stroke:0.15px #222;">13</div>
<div class="a" style="left:47.00px;top:665.24px;width:174px;height:29px;overflow:hidden"><div class="t" style="left:0;top:4px;font-size:21px;line-height:21px;color:#000;font-weight:normal;transform:scale(1.0,0.95);transform-origin:0 17.78px;-webkit-text-stroke:0.15px #000;">Vendor</div></div>
<div class="t" style="left:224.00px;top:669.24px;font-size:21px;line-height:21px;color:#000;font-weight:normal;transform:scale(0.963,0.95);transform-origin:0 17.78px;-webkit-text-stroke:0.15px #000;">People</div>
<div class="t" style="left:575.00px;top:669.24px;font-size:21px;line-height:21px;color:#000;font-weight:normal;transform:scale(1.036,0.95);transform-origin:0 17.78px;-webkit-text-stroke:0.15px #000;">Infrastructure</div>
<div class="t" style="left:928.00px;top:669.24px;font-size:21px;line-height:21px;color:#000;font-weight:normal;transform:scale(1.024,0.95);transform-origin:0 17.78px;-webkit-text-stroke:0.15px #000;">WW IT Distributions</div>
<div class="t" style="left:1404.09px;top:669.24px;font-size:21px;line-height:21px;color:#000;font-weight:normal;transform:scale(1.0,0.95);transform-origin:0 17.78px;-webkit-text-stroke:0.15px #000;">$13,940</div>
<div class="t" style="left:8.82px;top:699.65px;font-size:21px;line-height:21px;color:#222;font-weight:normal;transform:scale(1.0,0.95);transform-origin:0 17.78px;-webkit-text-stroke:0.15px #222;">14</div>
<div class="a" style="left:47.00px;top:695.65px;width:174px;height:29px;overflow:hidden"><div class="t" style="left:0;top:4px;font-size:21px;line-height:21px;color:#000;font-weight:normal;transform:scale(1.0,0.95);transform-origin:0 17.78px;-webkit-text-stroke:0.15px #000;">Contractor</div></div>
<div class="t" style="left:224.00px;top:699.65px;font-size:21px;line-height:21px;color:#000;font-weight:normal;transform:scale(0.963,0.95);transform-origin:0 17.78px;-webkit-text-stroke:0.15px #000;">People</div>
<div class="t" style="left:575.00px;top:699.65px;font-size:21px;line-height:21px;color:#000;font-weight:normal;transform:scale(1.036,0.95);transform-origin:0 17.78px;-webkit-text-stroke:0.15px #000;">Infrastructure</div>
<div class="t" style="left:928.00px;top:699.65px;font-size:21px;line-height:21px;color:#000;font-weight:normal;transform:scale(1.024,0.95);transform-origin:0 17.78px;-webkit-text-stroke:0.15px #000;">WW IT Distributions</div>
<div class="t" style="left:1415.76px;top:699.65px;font-size:21px;line-height:21px;color:#000;font-weight:normal;transform:scale(1.0,0.95);transform-origin:0 17.78px;-webkit-text-stroke:0.15px #000;">$7,634</div>
<div class="t" style="left:8.82px;top:730.06px;font-size:21px;line-height:21px;color:#222;font-weight:normal;transform:scale(1.0,0.95);transform-origin:0 17.78px;-webkit-text-stroke:0.15px #222;">15</div>
<div class="a" style="left:47.00px;top:726.06px;width:174px;height:29px;overflow:hidden"><div class="t" style="left:0;top:4px;font-size:21px;line-height:21px;color:#000;font-weight:normal;transform:scale(1.0,0.95);transform-origin:0 17.78px;-webkit-text-stroke:0.15px #000;">Satellite Engineering</div></div>
<div class="t" style="left:224.00px;top:730.06px;font-size:21px;line-height:21px;color:#000;font-weight:normal;transform:scale(0.963,0.95);transform-origin:0 17.78px;-webkit-text-stroke:0.15px #000;">People</div>
<div class="t" style="left:575.00px;top:730.06px;font-size:21px;line-height:21px;color:#000;font-weight:normal;transform:scale(1.036,0.95);transform-origin:0 17.78px;-webkit-text-stroke:0.15px #000;">Infrastructure</div>
<div class="t" style="left:928.00px;top:730.06px;font-size:21px;line-height:21px;color:#000;font-weight:normal;transform:scale(1.024,0.95);transform-origin:0 17.78px;-webkit-text-stroke:0.15px #000;">WW IT Distributions</div>
<div class="t" style="left:1415.76px;top:730.06px;font-size:21px;line-height:21px;color:#000;font-weight:normal;transform:scale(1.0,0.95);transform-origin:0 17.78px;-webkit-text-stroke:0.15px #000;">$4,647</div>
<div class="t" style="left:8.82px;top:760.47px;font-size:21px;line-height:21px;color:#222;font-weight:normal;transform:scale(1.0,0.95);transform-origin:0 17.78px;-webkit-text-stroke:0.15px #222;">16</div>
<div class="a" style="left:47.00px;top:756.47px;width:174px;height:29px;overflow:hidden"><div class="t" style="left:0;top:4px;font-size:21px;line-height:21px;color:#000;font-weight:normal;transform:scale(1.0,0.95);transform-origin:0 17.78px;-webkit-text-stroke:0.15px #000;">General Management</div></div>
<div class="t" style="left:224.00px;top:760.47px;font-size:21px;line-height:21px;color:#000;font-weight:normal;transform:scale(0.963,0.95);transform-origin:0 17.78px;-webkit-text-stroke:0.15px #000;">People</div>
<div class="t" style="left:575.00px;top:760.47px;font-size:21px;line-height:21px;color:#000;font-weight:normal;transform:scale(1.036,0.95);transform-origin:0 17.78px;-webkit-text-stroke:0.15px #000;">Infrastructure</div>
<div class="t" style="left:928.00px;top:760.47px;font-size:21px;line-height:21px;color:#000;font-weight:normal;transform:scale(1.024,0.95);transform-origin:0 17.78px;-webkit-text-stroke:0.15px #000;">WW IT Distributions</div>
<div class="t" style="left:1415.76px;top:760.47px;font-size:21px;line-height:21px;color:#000;font-weight:normal;transform:scale(1.0,0.95);transform-origin:0 17.78px;-webkit-text-stroke:0.15px #000;">$1,659</div>
<div class="t" style="left:8.82px;top:790.88px;font-size:21px;line-height:21px;color:#222;font-weight:normal;transform:scale(1.0,0.95);transform-origin:0 17.78px;-webkit-text-stroke:0.15px #222;">17</div>
<div class="a" style="left:47.00px;top:786.88px;width:174px;height:29px;overflow:hidden"><div class="t" style="left:0;top:4px;font-size:21px;line-height:21px;color:#000;font-weight:normal;transform:scale(1.0,0.95);transform-origin:0 17.78px;-webkit-text-stroke:0.15px #000;">General Management</div></div>
<div class="t" style="left:224.00px;top:790.88px;font-size:21px;line-height:21px;color:#000;font-weight:normal;transform:scale(0.984,0.95);transform-origin:0 17.78px;-webkit-text-stroke:0.15px #000;">Shared Operations</div>
<div class="t" style="left:575.00px;top:790.88px;font-size:21px;line-height:21px;color:#000;font-weight:normal;transform:scale(1.004,0.95);transform-origin:0 17.78px;-webkit-text-stroke:0.15px #000;">Allocated Azure</div>
<div class="t" style="left:928.00px;top:790.88px;font-size:21px;line-height:21px;color:#000;font-weight:normal;transform:scale(0.965,0.95);transform-origin:0 17.78px;-webkit-text-stroke:0.15px #000;">Storage</div>
<div class="t" style="left:1444.97px;top:790.88px;font-size:21px;line-height:21px;color:#000;font-weight:normal;transform:scale(1.0,0.95);transform-origin:0 17.78px;-webkit-text-stroke:0.15px #000;">$10</div>
<div class="t" style="left:8.82px;top:821.29px;font-size:21px;line-height:21px;color:#222;font-weight:normal;transform:scale(1.0,0.95);transform-origin:0 17.78px;-webkit-text-stroke:0.15px #222;">18</div>
<div class="a" style="left:47.00px;top:817.29px;width:174px;height:29px;overflow:hidden"><div class="t" style="left:0;top:4px;font-size:21px;line-height:21px;color:#000;font-weight:normal;transform:scale(1.0,0.95);transform-origin:0 17.78px;-webkit-text-stroke:0.15px #000;">Satellite Support</div></div>
<div class="t" style="left:224.00px;top:821.29px;font-size:21px;line-height:21px;color:#000;font-weight:normal;transform:scale(0.963,0.95);transform-origin:0 17.78px;-webkit-text-stroke:0.15px #000;">People</div>
<div class="t" style="left:575.00px;top:821.29px;font-size:21px;line-height:21px;color:#000;font-weight:normal;transform:scale(1.036,0.95);transform-origin:0 17.78px;-webkit-text-stroke:0.15px #000;">Infrastructure</div>
<div class="t" style="left:928.00px;top:821.29px;font-size:21px;line-height:21px;color:#000;font-weight:normal;transform:scale(1.024,0.95);transform-origin:0 17.78px;-webkit-text-stroke:0.15px #000;">WW IT Distributions</div>
<div class="t" style="left:1415.76px;top:821.29px;font-size:21px;line-height:21px;color:#000;font-weight:normal;transform:scale(1.0,0.95);transform-origin:0 17.78px;-webkit-text-stroke:0.15px #000;">$5,644</div>
<div class="t" style="left:8.82px;top:851.70px;font-size:21px;line-height:21px;color:#222;font-weight:normal;transform:scale(1.0,0.95);transform-origin:0 17.78px;-webkit-text-stroke:0.15px #222;">19</div>
<div class="a" style="left:47.00px;top:847.70px;width:174px;height:29px;overflow:hidden"><div class="t" style="left:0;top:4px;font-size:21px;line-height:21px;color:#000;font-weight:normal;transform:scale(1.0,0.95);transform-origin:0 17.78px;-webkit-text-stroke:0.15px #000;">Satellite Sales</div></div>
<div class="t" style="left:224.00px;top:851.70px;font-size:21px;line-height:21px;color:#000;font-weight:normal;transform:scale(0.963,0.95);transform-origin:0 17.78px;-webkit-text-stroke:0.15px #000;">People</div>
<div class="t" style="left:575.00px;top:851.70px;font-size:21px;line-height:21px;color:#000;font-weight:normal;transform:scale(1.036,0.95);transform-origin:0 17.78px;-webkit-text-stroke:0.15px #000;">Infrastructure</div>
<div class="t" style="left:928.00px;top:851.70px;font-size:21px;line-height:21px;color:#000;font-weight:normal;transform:scale(1.024,0.95);transform-origin:0 17.78px;-webkit-text-stroke:0.15px #000;">WW IT Distributions</div>
<div class="t" style="left:1433.28px;top:851.70px;font-size:21px;line-height:21px;color:#000;font-weight:normal;transform:scale(1.0,0.95);transform-origin:0 17.78px;-webkit-text-stroke:0.15px #000;">$663</div>
<div class="t" style="left:8.82px;top:882.11px;font-size:21px;line-height:21px;color:#222;font-weight:normal;transform:scale(1.0,0.95);transform-origin:0 17.78px;-webkit-text-stroke:0.15px #222;">20</div>
<div class="a" style="left:47.00px;top:878.11px;width:174px;height:29px;overflow:hidden"><div class="t" style="left:0;top:4px;font-size:21px;line-height:21px;color:#000;font-weight:normal;transform:scale(1.0,0.95);transform-origin:0 17.78px;-webkit-text-stroke:0.15px #000;">Satellite Marketing</div></div>
<div class="t" style="left:224.00px;top:882.11px;font-size:21px;line-height:21px;color:#000;font-weight:normal;transform:scale(0.963,0.95);transform-origin:0 17.78px;-webkit-text-stroke:0.15px #000;">People</div>
<div class="t" style="left:575.00px;top:882.11px;font-size:21px;line-height:21px;color:#000;font-weight:normal;transform:scale(1.036,0.95);transform-origin:0 17.78px;-webkit-text-stroke:0.15px #000;">Infrastructure</div>
<div class="t" style="left:928.00px;top:882.11px;font-size:21px;line-height:21px;color:#000;font-weight:normal;transform:scale(1.024,0.95);transform-origin:0 17.78px;-webkit-text-stroke:0.15px #000;">WW IT Distributions</div>
<div class="t" style="left:1433.28px;top:882.11px;font-size:21px;line-height:21px;color:#000;font-weight:normal;transform:scale(1.0,0.95);transform-origin:0 17.78px;-webkit-text-stroke:0.15px #000;">$663</div>
<div class="t" style="left:8.82px;top:912.52px;font-size:21px;line-height:21px;color:#222;font-weight:normal;transform:scale(1.0,0.95);transform-origin:0 17.78px;-webkit-text-stroke:0.15px #222;">21</div>
<div class="a" style="left:47.00px;top:908.52px;width:174px;height:29px;overflow:hidden"><div class="t" style="left:0;top:4px;font-size:21px;line-height:21px;color:#000;font-weight:normal;transform:scale(1.0,0.95);transform-origin:0 17.78px;-webkit-text-stroke:0.15px #000;">Satellite Operations</div></div>
<div class="t" style="left:224.00px;top:912.52px;font-size:21px;line-height:21px;color:#000;font-weight:normal;transform:scale(0.963,0.95);transform-origin:0 17.78px;-webkit-text-stroke:0.15px #000;">People</div>
<div class="t" style="left:575.00px;top:912.52px;font-size:21px;line-height:21px;color:#000;font-weight:normal;transform:scale(1.036,0.95);transform-origin:0 17.78px;-webkit-text-stroke:0.15px #000;">Infrastructure</div>
<div class="t" style="left:928.00px;top:912.52px;font-size:21px;line-height:21px;color:#000;font-weight:normal;transform:scale(1.024,0.95);transform-origin:0 17.78px;-webkit-text-stroke:0.15px #000;">WW IT Distributions</div>
<div class="t" style="left:1415.76px;top:912.52px;font-size:21px;line-height:21px;color:#000;font-weight:normal;transform:scale(1.0,0.95);transform-origin:0 17.78px;-webkit-text-stroke:0.15px #000;">$4,648</div>
<div class="t" style="left:8.82px;top:942.93px;font-size:21px;line-height:21px;color:#222;font-weight:normal;transform:scale(1.0,0.95);transform-origin:0 17.78px;-webkit-text-stroke:0.15px #222;">22</div>
<div class="a" style="left:47.00px;top:938.93px;width:174px;height:29px;overflow:hidden"><div class="t" style="left:0;top:4px;font-size:21px;line-height:21px;color:#000;font-weight:normal;transform:scale(1.0,0.95);transform-origin:0 17.78px;-webkit-text-stroke:0.15px #000;">Hardware</div></div>
<div class="t" style="left:224.00px;top:942.93px;font-size:21px;line-height:21px;color:#000;font-weight:normal;transform:scale(0.984,0.95);transform-origin:0 17.78px;-webkit-text-stroke:0.15px #000;">Shared Operations</div>
<div class="t" style="left:575.00px;top:942.93px;font-size:21px;line-height:21px;color:#000;font-weight:normal;transform:scale(1.004,0.95);transform-origin:0 17.78px;-webkit-text-stroke:0.15px #000;">Allocated Azure</div>
<div class="t" style="left:928.00px;top:942.93px;font-size:21px;line-height:21px;color:#000;font-weight:normal;transform:scale(1.0,0.95);transform-origin:0 17.78px;-webkit-text-stroke:0.15px #000;">Compute</div>
<div class="t" style="left:1444.97px;top:942.93px;font-size:21px;line-height:21px;color:#000;font-weight:normal;transform:scale(1.0,0.95);transform-origin:0 17.78px;-webkit-text-stroke:0.15px #000;">$32</div>
<div class="t" style="left:8.82px;top:973.34px;font-size:21px;line-height:21px;color:#222;font-weight:normal;transform:scale(1.0,0.95);transform-origin:0 17.78px;-webkit-text-stroke:0.15px #222;">23</div>
<div class="a" style="left:47.00px;top:969.34px;width:174px;height:29px;overflow:hidden"><div class="t" style="left:0;top:4px;font-size:21px;line-height:21px;color:#000;font-weight:normal;transform:scale(0.857,0.95);transform-origin:0 17.78px;-webkit-text-stroke:0.15px #000;">IT</div></div>
<div class="t" style="left:224.00px;top:973.34px;font-size:21px;line-height:21px;color:#000;font-weight:normal;transform:scale(0.984,0.95);transform-origin:0 17.78px;-webkit-text-stroke:0.15px #000;">Shared Operations</div>
<div class="t" style="left:575.00px;top:973.34px;font-size:21px;line-height:21px;color:#000;font-weight:normal;transform:scale(1.004,0.95);transform-origin:0 17.78px;-webkit-text-stroke:0.15px #000;">Allocated Azure</div>
<div class="t" style="left:928.00px;top:973.34px;font-size:21px;line-height:21px;color:#000;font-weight:normal;transform:scale(1.0,0.95);transform-origin:0 17.78px;-webkit-text-stroke:0.15px #000;">Compute</div>
<div class="t" style="left:1433.28px;top:973.34px;font-size:21px;line-height:21px;color:#000;font-weight:normal;transform:scale(1.0,0.95);transform-origin:0 17.78px;-webkit-text-stroke:0.15px #000;">$381</div>
<div class="t" style="left:8.82px;top:1003.75px;font-size:21px;line-height:21px;color:#222;font-weight:normal;transform:scale(1.0,0.95);transform-origin:0 17.78px;-webkit-text-stroke:0.15px #222;">24</div>
<div class="a" style="left:47.00px;top:999.75px;width:174px;height:29px;overflow:hidden"><div class="t" style="left:0;top:4px;font-size:21px;line-height:21px;color:#000;font-weight:normal;transform:scale(1.0,0.95);transform-origin:0 17.78px;-webkit-text-stroke:0.15px #000;">General Management</div></div>
<div class="t" style="left:224.00px;top:1003.75px;font-size:21px;line-height:21px;color:#000;font-weight:normal;transform:scale(0.984,0.95);transform-origin:0 17.78px;-webkit-text-stroke:0.15px #000;">Shared Operations</div>
<div class="t" style="left:575.00px;top:1003.75px;font-size:21px;line-height:21px;color:#000;font-weight:normal;transform:scale(1.004,0.95);transform-origin:0 17.78px;-webkit-text-stroke:0.15px #000;">Allocated Azure</div>
<div class="t" style="left:928.00px;top:1003.75px;font-size:21px;line-height:21px;color:#000;font-weight:normal;transform:scale(1.0,0.95);transform-origin:0 17.78px;-webkit-text-stroke:0.15px #000;">Compute</div>
<div class="t" style="left:1433.28px;top:1003.75px;font-size:21px;line-height:21px;color:#000;font-weight:normal;transform:scale(1.0,0.95);transform-origin:0 17.78px;-webkit-text-stroke:0.15px #000;">$620</div>
<div class="t" style="left:8.82px;top:1034.16px;font-size:21px;line-height:21px;color:#222;font-weight:normal;transform:scale(1.0,0.95);transform-origin:0 17.78px;-webkit-text-stroke:0.15px #222;">25</div>
<div class="a" style="left:47.00px;top:1030.16px;width:174px;height:29px;overflow:hidden"><div class="t" style="left:0;top:4px;font-size:21px;line-height:21px;color:#000;font-weight:normal;transform:scale(1.0,0.95);transform-origin:0 17.78px;-webkit-text-stroke:0.15px #000;">Satellite Operations</div></div>
<div class="t" style="left:224.00px;top:1034.16px;font-size:21px;line-height:21px;color:#000;font-weight:normal;transform:scale(0.984,0.95);transform-origin:0 17.78px;-webkit-text-stroke:0.15px #000;">Shared Operations</div>
<div class="t" style="left:575.00px;top:1034.16px;font-size:21px;line-height:21px;color:#000;font-weight:normal;transform:scale(1.004,0.95);transform-origin:0 17.78px;-webkit-text-stroke:0.15px #000;">Allocated Azure</div>
<div class="t" style="left:928.00px;top:1034.16px;font-size:21px;line-height:21px;color:#000;font-weight:normal;transform:scale(1.0,0.95);transform-origin:0 17.78px;-webkit-text-stroke:0.15px #000;">Compute</div>
<div class="t" style="left:1433.28px;top:1034.16px;font-size:21px;line-height:21px;color:#000;font-weight:normal;transform:scale(1.0,0.95);transform-origin:0 17.78px;-webkit-text-stroke:0.15px #000;">$207</div>
<div class="t" style="left:8.82px;top:1064.57px;font-size:21px;line-height:21px;color:#222;font-weight:normal;transform:scale(1.0,0.95);transform-origin:0 17.78px;-webkit-text-stroke:0.15px #222;">26</div>
<div class="a" style="left:47.00px;top:1060.57px;width:174px;height:29px;overflow:hidden"><div class="t" style="left:0;top:4px;font-size:21px;line-height:21px;color:#000;font-weight:normal;transform:scale(1.003,0.95);transform-origin:0 17.78px;-webkit-text-stroke:0.15px #000;">Operations</div></div>
<div class="t" style="left:224.00px;top:1064.57px;font-size:21px;line-height:21px;color:#000;font-weight:normal;transform:scale(0.963,0.95);transform-origin:0 17.78px;-webkit-text-stroke:0.15px #000;">People</div>
<div class="t" style="left:575.00px;top:1064.57px;font-size:21px;line-height:21px;color:#000;font-weight:normal;transform:scale(1.0,0.95);transform-origin:0 17.78px;-webkit-text-stroke:0.15px #000;">Other People</div>
<div class="t" style="left:928.00px;top:1064.57px;font-size:21px;line-height:21px;color:#000;font-weight:normal;transform:scale(1.033,0.95);transform-origin:0 17.78px;-webkit-text-stroke:0.15px #000;">Travel &amp; Entertainment</div>
<div class="t" style="left:1415.76px;top:1064.57px;font-size:21px;line-height:21px;color:#000;font-weight:normal;transform:scale(1.0,0.95);transform-origin:0 17.78px;-webkit-text-stroke:0.15px #000;">$1,265</div>
<div class="a" style="left:42px;top:299px;width:1449px;height:30px;background:#548235"></div>
<div class="a" style="left:1491px;top:299px;width:429px;height:30px;background:#C6C6C6"></div>
<div class="a" style="left:1600px;top:299px;width:1px;height:30px;background:#B3B3B3"></div>
<div class="a" style="left:1709px;top:299px;width:1px;height:30px;background:#B3B3B3"></div>
<div class="a" style="left:1818px;top:299px;width:1px;height:30px;background:#B3B3B3"></div>
<div class="a" style="left:44px;top:300px;width:176px;height:28px;background:#70AD47"></div>
<div class="t" style="left:47.00px;top:304.02px;font-size:21px;line-height:21px;color:#FFFFFF;font-weight:bold;transform:scale(1.0,0.95);transform-origin:0 17.78px;">Team</div>
<div class="t" style="left:224.00px;top:304.02px;font-size:21px;line-height:21px;color:#D4DDCB;font-weight:bold;transform:scale(1.0,0.95);transform-origin:0 17.78px;">Category</div>
<div class="t" style="left:575.00px;top:304.02px;font-size:21px;line-height:21px;color:#D4DDCB;font-weight:bold;transform:scale(1.0,0.95);transform-origin:0 17.78px;">Type</div>
<div class="t" style="left:928.00px;top:304.02px;font-size:21px;line-height:21px;color:#D4DDCB;font-weight:bold;transform:scale(1.0,0.95);transform-origin:0 17.78px;">Line Item</div>
<div class="t" style="left:1334.00px;top:304.02px;font-size:21px;line-height:21px;color:#D4DDCB;font-weight:bold;transform:scale(1.0,0.95);transform-origin:0 17.78px;">Spend</div>
<div class="a" style="left:193px;top:300px;width:27px;height:28px;background:#FFFFFF;border:1px solid #FFFFFF"></div>
<svg class="a" style="left:201px;top:312px;" width="11" height="6" viewBox="0 0 11 6"><polygon points="0,0 11,0 5.5,5.5" fill="#5F5F5F"/></svg>
<div class="a" style="left:543px;top:300px;width:27px;height:28px;background:#C8C8C8;border:1px solid #9E9E9E"></div>
<svg class="a" style="left:551px;top:312px;" width="11" height="6" viewBox="0 0 11 6"><polygon points="0,0 11,0 5.5,5.5" fill="#5F5F5F"/></svg>
<div class="a" style="left:897px;top:300px;width:27px;height:28px;background:#C8C8C8;border:1px solid #9E9E9E"></div>
<svg class="a" style="left:905px;top:312px;" width="11" height="6" viewBox="0 0 11 6"><polygon points="0,0 11,0 5.5,5.5" fill="#5F5F5F"/></svg>
<div class="a" style="left:1303px;top:300px;width:27px;height:28px;background:#C8C8C8;border:1px solid #9E9E9E"></div>
<svg class="a" style="left:1311px;top:312px;" width="11" height="6" viewBox="0 0 11 6"><polygon points="0,0 11,0 5.5,5.5" fill="#5F5F5F"/></svg>
<div class="a" style="left:1464px;top:300px;width:27px;height:28px;background:#C8C8C8;border:1px solid #9E9E9E"></div>
<svg class="a" style="left:1472px;top:312px;" width="11" height="6" viewBox="0 0 11 6"><polygon points="0,0 11,0 5.5,5.5" fill="#5F5F5F"/></svg>
<div class="a" style="left:42px;top:297px;width:1878px;height:2px;background:#1E5E3C"></div>
<div class="a" style="left:42px;top:299px;width:1878px;height:1px;background:#C8EAD7"></div>
<div class="a" style="left:42px;top:328px;width:1878px;height:1px;background:#C8EAD7"></div>
<div class="a" style="left:42px;top:329px;width:1878px;height:2px;background:#1E5E3C"></div>
<div class="a" style="left:42px;top:297px;width:2px;height:34px;background:#1E5E3C"></div>
<div class="a" style="left:44px;top:300px;width:1px;height:28px;background:#C8EAD7"></div>
<div class="a" style="left:41px;top:325px;width:6px;height:6px;background:#1E5E3C;border-top:1px solid #E8F5EE;border-right:1px solid #E8F5EE"></div>
<div class="t" style="left:14.66px;top:304.72px;font-size:21px;line-height:21px;color:#1F5C40;font-weight:normal;transform:scale(1.0,0.95);transform-origin:0 17.78px;-webkit-text-stroke:0.15px #1F5C40;">1</div>
</body></html>
